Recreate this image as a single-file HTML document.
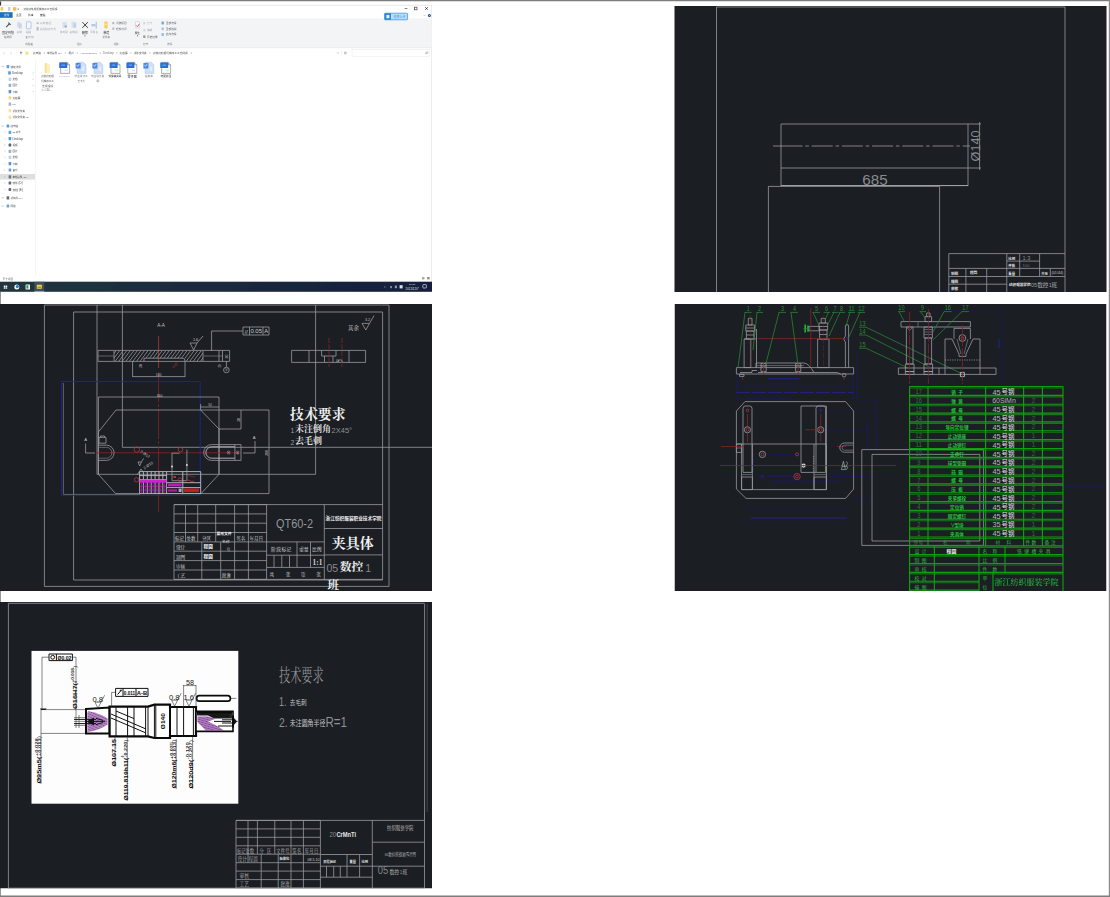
<!DOCTYPE html>
<html><head><meta charset="utf-8"><title>drawings</title><style>
html,body{margin:0;padding:0;background:#fff}
body{width:1110px;height:897px;overflow:hidden;font-family:"Liberation Sans",sans-serif}
svg{display:block}
.w{fill:none;stroke:#999b9f;stroke-width:.8}
.wb{fill:none;stroke:#b4b6b9;stroke-width:.95}
.wd{fill:none;stroke:#76787c;stroke-width:.75}
.wt{fill:none;stroke:#c9cacc;stroke-width:.8}
.r{fill:none;stroke:#8c2424;stroke-width:.8}
.rb{fill:none;stroke:#b23a3a;stroke-width:.8}
.b{fill:none;stroke:#2424a0;stroke-width:.85}
.bd{fill:none;stroke:#1b1b66;stroke-width:.8}
.gr{fill:none;stroke:#129e12;stroke-width:1.15}
.gl{fill:none;stroke:#2a8a33;stroke-width:.75}
.m{fill:none;stroke:#d21fd2;stroke-width:1}
.k{fill:none;stroke:#111;stroke-width:1}
.kb{fill:none;stroke:#0a0a0a;stroke-width:2}
.kt{fill:none;stroke:#333;stroke-width:.6}
.s{font-family:"Liberation Sans",sans-serif}
.f{font-family:"Liberation Serif",serif}
.mo{font-family:"Liberation Mono",monospace}
.c{font-family:"Liberation Sans","Noto Sans CJK SC",sans-serif}
.cb{font-family:"Liberation Sans","Noto Sans CJK SC",sans-serif;font-weight:bold}
.cs{font-family:"Liberation Serif","Noto Serif CJK SC",serif}
.csb{font-family:"Liberation Serif","Noto Serif CJK SC",serif;font-weight:bold}
</style></head><body><svg width="1110" height="897" viewBox="0 0 1110 897"><filter id="bl" x="0" y="0" width="1" height="1" filterUnits="objectBoundingBox"><feGaussianBlur stdDeviation=".42"/></filter><rect x="0" y="0" width="1110" height="897" fill="#fff"/><path d="M.4 0V897" stroke="#7d7d7d" stroke-width=".9"/><g id="p_ex" filter="url(#bl)"><clipPath id="cex"><rect x="0" y="0" width="432.4" height="292"/></clipPath><g clip-path="url(#cex)">
<rect x="0" y="1" width="432" height="291" fill="#ffffff"/>
<rect x="0" y="1.4" width="1.1" height="4.2" fill="#3a3a3a"/>
<path class="" d="M1 5.3L432 5.3" stroke="#e3e3e3" stroke-width=".8"/>
<path class="" d="M431.8 5.3L431.8 282" stroke="#dcdcdc" stroke-width=".8"/>
<rect x="0.6" y="7" width="2.6" height="3.6" fill="#f6c445" opacity=".9"/>
<rect x="8" y="7" width="2.4" height="3.8" fill="#b9c2cc" opacity=".8"/>
<rect x="13" y="7.2" width="3.4" height="3.4" fill="#f5b73c" opacity=".95"/>
<rect x="17.6" y="8.6" width="1.2" height="1" fill="#555"/>
<text class="c" x="23.5" y="9.94" font-size="2.6" fill="#222" opacity="0.85">边停边轧辊机械加工工艺规程</text>
<path class="" d="M404.6 8.5L407.4 8.5" stroke="#555" stroke-width=".7"/>
<rect x="414.4" y="7.2" width="2.6" height="2.6" fill="none" stroke="#444" stroke-width=".7"/>
<path class="" d="M425.2 7.2l2.6 2.6m0-2.6l-2.6 2.6" stroke="#333" stroke-width=".8" fill="none"/>
<rect x="0" y="12.2" width="12.6" height="5.6" fill="#1a6fc2"/>
<text class="c" x="3.8" y="16.01" font-size="2.8" fill="#fff" opacity="0.95">文件</text>
<text class="c" x="16" y="16.01" font-size="2.8" fill="#222" opacity="0.9">主页</text>
<text class="c" x="28" y="16.01" font-size="2.8" fill="#222" opacity="0.9">共享</text>
<text class="c" x="40" y="16.01" font-size="2.8" fill="#222" opacity="0.9">查看</text>
<rect x="0" y="18.4" width="431.6" height="29.2" fill="#f3f4f6"/>
<path class="" d="M0 47.7L432 47.7" stroke="#e4e5e7" stroke-width=".7"/>
<rect x="384.6" y="13.2" width="23" height="6.6" rx=".8" fill="#b7dffa" stroke="#2f8bd8" stroke-width=".7"/>
<rect x="384.6" y="13.2" width="6.4" height="6.6" fill="#2f8bd8"/>
<rect x="386.4" y="15" width="3" height="3.2" fill="#e8f4ff" rx=".6"/>
<text class="c" x="393.4" y="17.58" font-size="3" fill="#3a8ad8" opacity="0.8">拖拽上传</text>
<circle cx="429.4" cy="15.5" r="1.5" fill="#1c4f8e"/><circle cx="429.4" cy="15.5" r=".5" fill="#dfe9f5"/>
<path class="" d="M423.8 15.8l.8-.8.8.8" stroke="#888" stroke-width=".5" fill="none"/>
<path class="" d="M6.2 27.2l3.6-3.8M8.4 22.6l2.2 2.2" stroke="#454d5c" stroke-width="1.1" fill="none"/>
<text class="c" x="2" y="33.6" font-size="3" fill="#2a2a2a" opacity="0.85">固定到快</text>
<text class="c" x="4" y="37.89" font-size="2.5" fill="#2a2a2a" opacity="0.85">速访问</text>
<rect x="17" y="22" width="3.6" height="5" fill="#d5dce8" opacity=".8"/>
<rect x="18.6" y="23.6" width="3.2" height="5" fill="#c3cfe2" opacity=".8"/>
<text class="c" x="16.6" y="33.44" font-size="2.6" fill="#7d828a" opacity="0.7">复制</text>
<rect x="26.4" y="21.8" width="4.6" height="7" rx=".6" fill="#f4f7fc" stroke="#9db4d8" stroke-width=".7"/>
<text class="c" x="26" y="33.44" font-size="2.6" fill="#7d828a" opacity="0.75">粘贴</text>
<rect x="25.8" y="36" width="1.6" height="2.6" fill="#9aa3b0" opacity=".8"/>
<text class="c" x="28.2" y="38.41" font-size="2.8" fill="#7d828a" opacity="0.75">剪切</text>
<rect x="36.6" y="22.4" width="2" height="1.4" fill="#8a8f98" opacity=".7"/>
<text class="c" x="40" y="24.13" font-size="2.85" fill="#7d828a" opacity="0.6">复制路径</text>
<rect x="36.6" y="27" width="2" height="3.6" fill="#a8adb6" opacity=".8"/>
<text class="c" x="40" y="29.86" font-size="2.67" fill="#7d828a" opacity="0.6">粘贴快捷方式</text>
<text class="c" x="25.2" y="45.08" font-size="2.7" fill="#444" opacity="0.75">剪贴板</text>
<rect x="62.6" y="22" width="4.2" height="6" fill="#cfdcf0" opacity=".85"/>
<rect x="64.6" y="25.6" width="2.4" height="1.6" fill="#7aa0d6" opacity=".8"/>
<rect x="71.6" y="21.6" width="4" height="6.2" fill="#d3def0" opacity=".85"/>
<rect x="73.6" y="23.2" width="2.6" height="4.6" fill="#bccce6" opacity=".8"/>
<text class="c" x="60" y="33.46" font-size="2.67" fill="#7d828a" opacity="0.7">移动到</text>
<text class="c" x="69.6" y="33.46" font-size="2.67" fill="#7d828a" opacity="0.7">复制到</text>
<path class="" d="M82.4 22.2l5.4 5.6m0-5.6l-5.4 5.6" stroke="#2c2c2c" stroke-width=".9" fill="none"/>
<text class="c" x="82" y="33.54" font-size="2.9" fill="#111" opacity="0.95">删除</text>
<rect x="84.6" y="35.2" width="0.8" height="1.2" fill="#555"/>
<rect x="91.4" y="24" width="4" height="2.4" fill="#a8c0e4" opacity=".85"/>
<path class="" d="M96.2 21.8L96.2 28.6" stroke="#8aa4cf" stroke-width=".7"/>
<text class="c" x="90.2" y="33.44" font-size="2.6" fill="#7d828a" opacity="0.7">重命名</text>
<text class="c" x="76.8" y="44.96" font-size="2.4" fill="#555" opacity="0.7">组织</text>
<rect x="104.4" y="21.4" width="3.2" height="7" fill="#f6cf4a" rx=".8"/>
<rect x="105" y="23.6" width="2" height="1.6" fill="#fbe7a0"/>
<text class="c" x="103.4" y="33.54" font-size="2.9" fill="#111" opacity="0.95">新建</text>
<text class="c" x="102.6" y="37.89" font-size="2.5" fill="#444" opacity="0.75">文件夹</text>
<rect x="112.4" y="22" width="1.8" height="2.2" fill="#9aa3b3" opacity=".8"/>
<text class="c" x="116" y="24.07" font-size="2.7" fill="#333" opacity="0.75">新建项目</text>
<rect x="112.4" y="27.6" width="1.8" height="2.2" fill="#9aa3b3" opacity=".8"/>
<text class="c" x="116" y="29.67" font-size="2.7" fill="#333" opacity="0.75">轻松访问</text>
<text class="c" x="113.4" y="45.04" font-size="2.6" fill="#444" opacity="0.75">新建</text>
<rect x="135.4" y="21.6" width="4" height="6.4" rx=".5" fill="#fbfbfd" stroke="#b9bcc4" stroke-width=".5"/>
<path class="" d="M136.2 25.4l1.2 1.4 2-3" stroke="#d04a3a" stroke-width=".8" fill="none"/>
<text class="c" x="134.8" y="33.5" font-size="2.5" fill="#111" opacity="0.9">属性</text>
<rect x="137" y="35.2" width="0.8" height="1.2" fill="#555"/>
<rect x="143.4" y="22" width="1.8" height="2.4" fill="#c2c7d0" opacity=".7"/>
<text class="c" x="147" y="24.24" font-size="2.6" fill="#7d828a" opacity="0.5">打开</text>
<rect x="143.4" y="29" width="1.8" height="2.4" fill="#c2c7d0" opacity=".7"/>
<text class="c" x="147" y="31.14" font-size="2.6" fill="#7d828a" opacity="0.7">编辑</text>
<rect x="143.2" y="35.4" width="2.2" height="2.6" fill="#7c8a6a" opacity=".8"/>
<text class="c" x="147" y="37.75" font-size="2.65" fill="#333" opacity="0.8">历史记录</text>
<text class="c" x="143" y="45.04" font-size="2.6" fill="#444" opacity="0.7">打开</text>
<rect x="161.6" y="21.6" width="2.2" height="2.8" fill="#3f8fd8" opacity=".8"/>
<text class="c" x="165.8" y="23.97" font-size="2.7" fill="#2c3644" opacity="0.78">全部选择</text>
<rect x="161.6" y="27.4" width="2.2" height="2.8" fill="#9ab4d8" opacity=".8"/>
<text class="c" x="165.8" y="29.77" font-size="2.7" fill="#2c3644" opacity="0.78">全部取消</text>
<rect x="161.6" y="33.1" width="2.2" height="2.8" fill="#7aa6dc" opacity=".8"/>
<text class="c" x="165.8" y="35.47" font-size="2.7" fill="#2c3644" opacity="0.78">反向选择</text>
<text class="c" x="167" y="45.04" font-size="2.6" fill="#444" opacity="0.7">选择</text>
<path class="" d="M4.6 52l-1.2 1.2 1.2 1.2M10.6 52l1.2 1.2-1.2 1.2" stroke="#c4c4c4" stroke-width=".6" fill="none"/>
<path class="" d="M21 54.4v-2.6m-1.1 1.1l1.1-1.1 1.1 1.1" stroke="#555" stroke-width=".6" fill="none"/>
<rect x="25.4" y="51.4" width="3" height="3.4" fill="#f8e08a" rx=".6"/>
<text class="c" x="33" y="53.96" font-size="2.67" fill="#222" opacity="0.8">此电脑</text>
<text class="c" x="47" y="53.91" font-size="2.5" fill="#222" opacity="0.8">本地磁盘 (C:)</text>
<text class="c" x="68.5" y="53.97" font-size="2.7" fill="#222" opacity="0.8">用户</text>
<text class="s" x="80" y="53.88" font-size="2.5" fill="#555" opacity="0.8" textLength="17" lengthAdjust="spacingAndGlyphs">Administrator</text>
<text class="s" x="103" y="53.95" font-size="2.6" fill="#555" opacity="0.8" textLength="10.8" lengthAdjust="spacingAndGlyphs">Desktop</text>
<text class="c" x="119.6" y="53.98" font-size="2.7" fill="#222" opacity="0.8">大截屏</text>
<text class="c" x="133.7" y="53.94" font-size="2.6" fill="#222" opacity="0.8">新建文件夹</text>
<text class="c" x="152.8" y="53.97" font-size="2.7" fill="#222" opacity="0.8">边停边轧辊机械加工工艺规程</text>
<path class="" d="M44 52.2l.8.8-.8.8" stroke="#888" stroke-width=".5" fill="none"/>
<path class="" d="M65 52.2l.8.8-.8.8" stroke="#888" stroke-width=".5" fill="none"/>
<path class="" d="M77 52.2l.8.8-.8.8" stroke="#888" stroke-width=".5" fill="none"/>
<path class="" d="M100 52.2l.8.8-.8.8" stroke="#888" stroke-width=".5" fill="none"/>
<path class="" d="M116.4 52.2l.8.8-.8.8" stroke="#888" stroke-width=".5" fill="none"/>
<path class="" d="M130.6 52.2l.8.8-.8.8" stroke="#888" stroke-width=".5" fill="none"/>
<path class="" d="M149.6 52.2l.8.8-.8.8" stroke="#888" stroke-width=".5" fill="none"/>
<path class="" d="M191 52.2l.8.8-.8.8" stroke="#888" stroke-width=".5" fill="none"/>
<path class="" d="M337 52.6l.8.8.8-.8" stroke="#777" stroke-width=".5" fill="none"/>
<circle cx="345.4" cy="53" r="1" fill="none" stroke="#777" stroke-width=".5"/>
<path class="" d="M341.6 49.6L341.6 56.4" stroke="#ececec" stroke-width=".6"/>
<rect x="352" y="49.6" width="77.6" height="6.8" fill="#fff" stroke="#ececec" stroke-width=".6"/>
<path class="" d="M425.4 54l1-1" stroke="#888" stroke-width=".6" fill="none"/>
<circle cx="427" cy="52.6" r=".9" fill="none" stroke="#888" stroke-width=".5"/>
<path class="" d="M35.6 60L35.6 276" stroke="#f0f0f0" stroke-width=".7"/>
<rect x="0" y="174" width="35" height="5.6" fill="#d9d9d9" opacity=".85"/>
<path class="" d="M1.8 66.2l.9.9.9-.9" stroke="#666" stroke-width=".5" fill="none"/>
<rect x="6.6" y="65" width="2.6" height="3.2" fill="#3f8fe0" rx=".5" opacity=".85"/>
<text class="c" x="10.4" y="67.55" font-size="2.65" fill="#1e1e1e" opacity="0.85">快速访问</text>
<rect x="8.2" y="71.3" width="2.6" height="3.2" fill="#2f86d8" rx=".5" opacity=".85"/>
<text class="s" x="12" y="73.87" font-size="2.7" fill="#1e1e1e" opacity="0.85" textLength="11" lengthAdjust="spacingAndGlyphs">Desktop</text>
<rect x="8.6" y="77.7" width="2.6" height="3.2" fill="#b8c8d8" rx=".5" opacity=".85"/>
<text class="c" x="12.4" y="80.24" font-size="2.6" fill="#1e1e1e" opacity="0.85">文档</text>
<rect x="8.6" y="83.7" width="2.6" height="3.2" fill="#8aa0b8" rx=".5" opacity=".85"/>
<text class="c" x="12.4" y="86.24" font-size="2.6" fill="#1e1e1e" opacity="0.85">图片</text>
<rect x="8.6" y="90" width="2.6" height="3.2" fill="#2f7fd0" rx=".5" opacity=".85"/>
<text class="c" x="12.4" y="92.54" font-size="2.6" fill="#1e1e1e" opacity="0.85">下载</text>
<rect x="8.6" y="96.3" width="2.6" height="3.2" fill="#f3cf55" rx=".5" opacity=".85"/>
<text class="c" x="12.4" y="98.86" font-size="2.67" fill="#1e1e1e" opacity="0.85">大截屏</text>
<rect x="8.6" y="102.6" width="2.6" height="3.2" fill="#9aa4b4" rx=".5" opacity=".85"/>
<text class="s" x="12.4" y="105.04" font-size="2.3" fill="#1e1e1e" opacity="0.85">rec</text>
<rect x="8.6" y="109" width="2.6" height="3.2" fill="#f6dd8a" rx=".5" opacity=".85"/>
<text class="c" x="12.4" y="111.51" font-size="2.5" fill="#1e1e1e" opacity="0.85">新建文件夹</text>
<rect x="8.6" y="115.7" width="2.6" height="3.2" fill="#f6dd8a" rx=".5" opacity=".85"/>
<text class="c" x="12.4" y="118.2" font-size="2.5" fill="#1e1e1e" opacity="0.85">新建文件夹 (2)</text>
<path class="" d="M1.8 125.6l.9.9.9-.9" stroke="#666" stroke-width=".5" fill="none"/>
<rect x="6.6" y="124.4" width="2.6" height="3.2" fill="#3a8ad8" rx=".5" opacity=".85"/>
<text class="c" x="10.4" y="126.94" font-size="2.6" fill="#1e1e1e" opacity="0.85">此电脑</text>
<path class="" d="M4.4 131.6l.8.8-.8.8" stroke="#aaa" stroke-width=".45" fill="none"/>
<rect x="8.6" y="130.8" width="2.6" height="3.2" fill="#35a0c8" rx=".5" opacity=".85"/>
<text class="c" x="12.4" y="133.24" font-size="2.3" fill="#1e1e1e" opacity="0.85">3D 对象</text>
<path class="" d="M4.4 137.9l.8.8-.8.8" stroke="#aaa" stroke-width=".45" fill="none"/>
<rect x="8.6" y="137.1" width="2.6" height="3.2" fill="#2f86d8" rx=".5" opacity=".85"/>
<text class="s" x="12.4" y="139.63" font-size="2.6" fill="#1e1e1e" opacity="0.85" textLength="10.6" lengthAdjust="spacingAndGlyphs">Desktop</text>
<path class="" d="M4.4 144.2l.8.8-.8.8" stroke="#aaa" stroke-width=".45" fill="none"/>
<rect x="8.6" y="143.4" width="2.6" height="3.2" fill="#3c4450" rx=".5" opacity=".85"/>
<text class="c" x="12.4" y="145.94" font-size="2.6" fill="#1e1e1e" opacity="0.85">视频</text>
<path class="" d="M4.4 150.6l.8.8-.8.8" stroke="#aaa" stroke-width=".45" fill="none"/>
<rect x="8.6" y="149.8" width="2.6" height="3.2" fill="#8aa0b8" rx=".5" opacity=".85"/>
<text class="c" x="12.4" y="152.34" font-size="2.6" fill="#1e1e1e" opacity="0.85">图片</text>
<path class="" d="M4.4 156.6l.8.8-.8.8" stroke="#aaa" stroke-width=".45" fill="none"/>
<rect x="8.6" y="155.8" width="2.6" height="3.2" fill="#b8c8d8" rx=".5" opacity=".85"/>
<text class="c" x="12.4" y="158.34" font-size="2.6" fill="#1e1e1e" opacity="0.85">文档</text>
<path class="" d="M4.4 162.9l.8.8-.8.8" stroke="#aaa" stroke-width=".45" fill="none"/>
<rect x="8.6" y="162.1" width="2.6" height="3.2" fill="#2f7fd0" rx=".5" opacity=".85"/>
<text class="c" x="12.4" y="164.64" font-size="2.6" fill="#1e1e1e" opacity="0.85">下载</text>
<path class="" d="M4.4 169.2l.8.8-.8.8" stroke="#aaa" stroke-width=".45" fill="none"/>
<rect x="8.6" y="168.4" width="2.6" height="3.2" fill="#3f8fe0" rx=".5" opacity=".85"/>
<text class="c" x="12.4" y="170.94" font-size="2.6" fill="#1e1e1e" opacity="0.85">音乐</text>
<path class="" d="M4.4 176l.8.8-.8.8" stroke="#aaa" stroke-width=".45" fill="none"/>
<rect x="8.6" y="175.2" width="2.6" height="3.2" fill="#5a6470" rx=".5" opacity=".85"/>
<text class="c" x="12.4" y="177.68" font-size="2.45" fill="#1e1e1e" opacity="0.85">本地磁盘 (C:)</text>
<path class="" d="M4.4 182.2l.8.8-.8.8" stroke="#aaa" stroke-width=".45" fill="none"/>
<rect x="8.6" y="181.4" width="2.6" height="3.2" fill="#4a525c" rx=".5" opacity=".85"/>
<text class="c" x="12.4" y="183.98" font-size="2.7" fill="#1e1e1e" opacity="0.85">软件 (D:)</text>
<path class="" d="M4.4 188.7l.8.8-.8.8" stroke="#aaa" stroke-width=".45" fill="none"/>
<rect x="8.6" y="187.9" width="2.6" height="3.2" fill="#4a525c" rx=".5" opacity=".85"/>
<text class="c" x="12.4" y="190.51" font-size="2.8" fill="#1e1e1e" opacity="0.85">文档 (E:)</text>
<path class="" d="M1.8 197.4l.9.9.9-.9" stroke="#666" stroke-width=".5" fill="none"/>
<rect x="6.6" y="196.2" width="2.6" height="3.2" fill="#4a525c" rx=".5" opacity=".85"/>
<text class="c" x="10.4" y="198.71" font-size="2.5" fill="#1e1e1e" opacity="0.85">新加卷 (F:)</text>
<path class="" d="M1.8 205.6l.9.9.9-.9" stroke="#666" stroke-width=".5" fill="none"/>
<rect x="6.6" y="204.4" width="2.6" height="3.2" fill="#4f95c8" rx=".5" opacity=".85"/>
<text class="c" x="10.4" y="206.94" font-size="2.6" fill="#1e1e1e" opacity="0.85">网络</text>
<path class="" d="M32.6 73.4l1-1" stroke="#999" stroke-width=".5" fill="none"/>
<path class="" d="M32.6 79.8l1-1" stroke="#999" stroke-width=".5" fill="none"/>
<path class="" d="M32.6 85.8l1-1" stroke="#999" stroke-width=".5" fill="none"/>
<path class="" d="M32.6 92.1l1-1" stroke="#999" stroke-width=".5" fill="none"/>
<path d="M44.4 63.2h3l.8 1h1.8v8.8h-5.6z" fill="#fbeeb4" opacity=".9"/>
<rect x="45" y="63.2" width="1.6" height="9.8" fill="#f7df86" opacity=".8"/>
<text class="c" x="41.2" y="77.42" font-size="2.56" fill="#333" opacity="0.8">边停边轧辊</text>
<text class="c" x="41.2" y="81.92" font-size="2.56" fill="#333" opacity="0.8">机械加工工</text>
<text class="c" x="42" y="86.53" font-size="2.85" fill="#333" opacity="0.8">艺规程设</text>
<text class="c" x="41.6" y="90.54" font-size="2.6" fill="#333" opacity="0.55" textLength="10.4" lengthAdjust="spacingAndGlyphs">计+CAD...</text>
<path d="M60.6 62.4h6.6l2.4 2.4v8.6h-9z" fill="#fdfdfd" stroke="#6a7078" stroke-width=".55"/>
<path d="M67.2 62.4v2.4h2.4" fill="#d6dbe2" stroke="#555" stroke-width=".45"/>
<rect x="59.2" y="62.6" width="8" height="5.4" fill="#2a6fd6" rx=".5"/>
<rect x="61.4" y="64.4" width="3.6" height="1.6" fill="#6aa0ec" opacity=".8"/>
<rect x="64.8" y="69.6" width="3" height="1.6" fill="#dfe4ea"/>
<path d="M77.2 62.2h6.2l2.6 2.6v8.6h-8.8z" fill="#cfe0f6" stroke="#a9c2e6" stroke-width=".5"/>
<rect x="75.6" y="63" width="5" height="5.4" fill="#3f7fe0" rx=".5" opacity=".92"/>
<path class="" d="M76.6 64.8l1.2 1.6 1.6-2.4" stroke="#fff" stroke-width=".6" fill="none"/>
<rect x="82" y="66.6" width="2.2" height="4.4" fill="#e9f1fb" opacity=".8"/>
<path d="M94 62.2h6.2l2.6 2.6v8.6h-8.8z" fill="#cfe0f6" stroke="#a9c2e6" stroke-width=".5"/>
<rect x="92.4" y="63" width="5" height="5.4" fill="#3f7fe0" rx=".5" opacity=".92"/>
<path class="" d="M93.4 64.8l1.2 1.6 1.6-2.4" stroke="#fff" stroke-width=".6" fill="none"/>
<rect x="98.8" y="66.6" width="2.2" height="4.4" fill="#e9f1fb" opacity=".8"/>
<path d="M111 62.4h6.6l2.4 2.4v8.6h-9z" fill="#fdfdfd" stroke="#6a7078" stroke-width=".55"/>
<path d="M117.6 62.4v2.4h2.4" fill="#d6dbe2" stroke="#555" stroke-width=".45"/>
<rect x="109.6" y="62.6" width="8" height="5.4" fill="#2a6fd6" rx=".5"/>
<rect x="111.8" y="64.4" width="3.6" height="1.6" fill="#6aa0ec" opacity=".8"/>
<rect x="115.2" y="69.6" width="3" height="1.6" fill="#dfe4ea"/>
<path d="M127.8 62.4h6.6l2.4 2.4v8.6h-9z" fill="#fdfdfd" stroke="#6a7078" stroke-width=".55"/>
<path d="M134.4 62.4v2.4h2.4" fill="#d6dbe2" stroke="#555" stroke-width=".45"/>
<rect x="126.4" y="62.6" width="8" height="5.4" fill="#2a6fd6" rx=".5"/>
<rect x="128.6" y="64.4" width="3.6" height="1.6" fill="#6aa0ec" opacity=".8"/>
<rect x="132" y="69.6" width="3" height="1.6" fill="#dfe4ea"/>
<path d="M145 62.2h6.2l2.6 2.6v8.6h-8.8z" fill="#cfe0f6" stroke="#a9c2e6" stroke-width=".5"/>
<rect x="143.4" y="63" width="5" height="5.4" fill="#3f7fe0" rx=".5" opacity=".92"/>
<path class="" d="M144.4 64.8l1.2 1.6 1.6-2.4" stroke="#fff" stroke-width=".6" fill="none"/>
<rect x="149.8" y="66.6" width="2.2" height="4.4" fill="#e9f1fb" opacity=".8"/>
<path d="M161.6 62.4h6.6l2.4 2.4v8.6h-9z" fill="#fdfdfd" stroke="#6a7078" stroke-width=".55"/>
<path d="M168.2 62.4v2.4h2.4" fill="#d6dbe2" stroke="#555" stroke-width=".45"/>
<rect x="160.2" y="62.6" width="8" height="5.4" fill="#2a6fd6" rx=".5"/>
<rect x="162.4" y="64.4" width="3.6" height="1.6" fill="#6aa0ec" opacity=".8"/>
<rect x="165.8" y="69.6" width="3" height="1.6" fill="#dfe4ea"/>
<text class="s" x="59.2" y="77.38" font-size="2.4" fill="#666" opacity="0.6" textLength="10.8" lengthAdjust="spacingAndGlyphs">MAC(96)</text>
<text class="c" x="74.6" y="77.44" font-size="2.6" fill="#333" opacity="0.75">毕业设计工</text>
<text class="c" x="91" y="77.44" font-size="2.6" fill="#333" opacity="0.75">毕业设计说</text>
<text class="c" x="108.4" y="77.44" font-size="2.6" fill="#111" opacity="0.9">铣键槽夹具</text>
<text class="c" x="127.6" y="77.6" font-size="3.07" fill="#111" opacity="0.9">零件图</text>
<text class="c" x="144.7" y="77.48" font-size="2.73" fill="#333" opacity="0.78">任务书</text>
<text class="c" x="160.5" y="77.47" font-size="2.7" fill="#111" opacity="0.92">装配总图</text>
<text class="c" x="77.6" y="81.89" font-size="2.47" fill="#444" opacity="0.7">艺卡片</text>
<text class="c" x="96.4" y="82.01" font-size="2.8" fill="#444" opacity="0.7">明</text>
<text class="c" x="3" y="279.58" font-size="2.7" fill="#333" opacity="0.75">8 个项目</text>
<rect x="422" y="277" width="2.4" height="2.4" fill="#a8a8a8"/>
<rect x="427.2" y="277" width="2.4" height="2.4" fill="#8c8c8c"/>
<linearGradient id="tb" x1="0" x2="1" y1="0" y2="0"><stop offset="0" stop-color="#21363e"/><stop offset=".45" stop-color="#1b2b3c"/><stop offset="1" stop-color="#141f3c"/></linearGradient>
<rect x="0" y="281.7" width="432" height="10.1" fill="url(#tb)"/>
<rect x="34.4" y="281.7" width="9.8" height="10.1" fill="#4a5a62" opacity=".8"/>
<rect x="34.4" y="291" width="9.8" height="0.8" fill="#9ab8d0"/>
<path d="M3.8 285.4h1.5v1.5h-1.5zm1.9 0h1.5v1.5h-1.5zm-1.9 1.9h1.5v1.5h-1.5zm1.9 0h1.5v1.5h-1.5z" fill="#f2f2f2"/>
<circle cx="16.8" cy="287" r="2.5" fill="#f4f8fc"/><circle cx="17.3" cy="286.6" r="1.5" fill="#1f74d0"/>
<rect x="25.6" y="284.4" width="4.4" height="5" fill="#f4f8f4" rx=".5"/>
<rect x="26.4" y="285.2" width="2" height="3.4" fill="#2f9a5a"/>
<rect x="36.8" y="284.8" width="5" height="4" fill="#f2cf52" rx=".5"/>
<rect x="37.6" y="286.6" width="3.4" height="1.4" fill="#7a6a2a" opacity=".6"/>
<path class="" d="M384.2 287.3l.8-.8.8.8" stroke="#c8d0dc" stroke-width=".5" fill="none"/>
<rect x="390.2" y="286" width="1.8" height="2.2" fill="#9aa6b8" opacity=".8"/>
<rect x="394.8" y="285.6" width="2.2" height="2.6" fill="#aab4c4" opacity=".8"/>
<rect x="399.6" y="285.2" width="3" height="3.2" fill="#e8ecf2" opacity=".95"/>
<text class="s" x="408.8" y="285.28" font-size="2.5" fill="#e0e6ee" opacity="0.85" textLength="6.6" lengthAdjust="spacingAndGlyphs">15:21</text>
<text class="s" x="405.6" y="290.15" font-size="2.7" fill="#eef2f6" opacity="0.9" textLength="13" lengthAdjust="spacingAndGlyphs">2021/12/7</text>
<rect x="422.8" y="284.6" width="3.6" height="3.4" rx=".6" fill="none" stroke="#dfe5ee" stroke-width=".7"/>
</g></g>
<g id="p_tr"><rect x="674.5" y="6" width="432" height="286" fill="#1b1e23"/>
<path class="w" d="M716.5 7L1065 7"/>
<path class="w" d="M716.5 7L716.5 292"/>
<path class="w" d="M1065 7L1065 292"/>
<path class="w" d="M781 124H968V168H781Z"/>
<path class="w" d="M773 146L782 146"/>
<path class="w" d="M781.5 146L970 146" stroke-dasharray="21 2.8 3.6 2.8"/>
<path class="w" d="M781 168L781 186"/>
<path class="w" d="M968 168L968 186"/>
<path class="wb" d="M781 185.6L968 185.6"/>
<path class="w" d="M968 124L981 124"/>
<path class="w" d="M968 168L981 168"/>
<path class="w" d="M979.6 122L979.6 170"/>
<text class="s" x="875" y="185" font-size="15.2" fill="#888a8e" text-anchor="middle">685</text>
<text class="s" x="980" y="146" font-size="12.6" fill="#888a8e" transform="rotate(-90 980 146)" text-anchor="middle">Ø140</text>
<path class="w" d="M768.4 292L768.4 186.4L939.6 186.4L939.6 292"/>
<path class="w" d="M948.8 253.6L1065 253.6"/>
<path class="w" d="M948.8 253.6L948.8 292"/>
<path class="w" d="M1006.8 261.1L1039.6 261.1"/>
<path class="w" d="M948.8 268.4L1065 268.4"/>
<path class="w" d="M948.8 276.5L1065 276.5"/>
<path class="w" d="M948.8 284.2L1006.8 284.2"/>
<path class="w" d="M965.9 268.4L965.9 292"/>
<path class="w" d="M986.7 268.4L986.7 292"/>
<path class="w" d="M1006.8 253.6L1006.8 292"/>
<path class="w" d="M1019.7 253.6L1019.7 276.5"/>
<path class="w" d="M1039.6 253.6L1039.6 276.5"/>
<path class="w" d="M1050.3 268.4L1050.3 276.5"/>
<text class="cb" x="1008.3" y="259.6" font-size="3.4" fill="#e2e2e2">比例</text>
<text class="s" x="1022.5" y="260.3" font-size="5.6" fill="#8d8f93">1:3</text>
<text class="cb" x="1008.3" y="267.3" font-size="3.4" fill="#e2e2e2">件数</text>
<text class="s" x="1022.5" y="267.2" font-size="4.2" fill="#6d6f73">100</text>
<text class="cb" x="951" y="274.9" font-size="3.6" fill="#e2e2e2">制图</text>
<text class="cb" x="970" y="274.3" font-size="3.6" fill="#e2e2e2">程圆</text>
<text class="cb" x="1008.3" y="274.9" font-size="3.4" fill="#e2e2e2">重量</text>
<text class="cb" x="1041.3" y="274.6" font-size="3.2" fill="#e2e2e2">共张</text>
<text class="s" x="1051.6" y="274.3" font-size="3.2" fill="#c8c8c8" textLength="11.6" lengthAdjust="spacingAndGlyphs">(01/44)</text>
<text class="cb" x="951" y="282.8" font-size="3.6" fill="#e2e2e2">描图</text>
<text class="cb" x="951" y="290.3" font-size="3.6" fill="#e2e2e2">审核</text>
<text class="cb" x="1009" y="286.4" font-size="3.6" fill="#e2e2e2">纺织服装学院</text>
<text class="s" x="1030.9" y="286.6" font-size="5.6" fill="#9a9ca0">05</text>
<text class="cs" x="1037.2" y="286.6" font-size="5.6" fill="#c4c4c4">数控</text>
<text class="s" x="1048.7" y="286.6" font-size="5.6" fill="#9a9ca0">1</text>
<text class="cs" x="1051.6" y="286.6" font-size="5.6" fill="#c4c4c4">班</text></g>
<g id="p_ml"><clipPath id="cml"><rect x="0" y="304" width="432" height="287"/></clipPath><g clip-path="url(#cml)">
<rect x="0" y="304" width="432" height="287" fill="#1b1e23"/>
<path class="w" d="M44.4 305H389V586.4H44.4Z"/>
<path class="w" d="M73.6 312H382.6V580H73.6Z"/>
<path class="w" d="M97 305L97 474.3L315.6 474.3L315.6 305"/>
<path class="w" d="M122.4 305L122.4 447.3L432 447.3"/>
<text class="s" x="161" y="327.2" font-size="4.6" fill="#c0c0c0" text-anchor="middle">A-A</text>
<path class="rb" d="M158.6 336L158.6 368"/>
<path class="r" d="M158.6 372L158.6 512" stroke-dasharray="30 2 3 2"/>
<path class="w" d="M98 350.4H229.6V361.4H98Z"/>
<clipPath id="hml"><path d="M114 351H203V361H185V358.2H144V361H114Z"/></clipPath>
<path class="w" clip-path="url(#hml)" d="M104 362L113 350M107.55 362L116.55 350M111.1 362L120.1 350M114.65 362L123.65 350M118.2 362L127.2 350M121.75 362L130.75 350M125.3 362L134.3 350M128.85 362L137.85 350M132.4 362L141.4 350M135.95 362L144.95 350M139.5 362L148.5 350M143.05 362L152.05 350M146.6 362L155.6 350M150.15 362L159.15 350M153.7 362L162.7 350M157.25 362L166.25 350M160.8 362L169.8 350M164.35 362L173.35 350M167.9 362L176.9 350M171.45 362L180.45 350M175 362L184 350M178.55 362L187.55 350M182.1 362L191.1 350M185.65 362L194.65 350M189.2 362L198.2 350M192.75 362L201.75 350M196.3 362L205.3 350M199.85 362L208.85 350M203.4 362L212.4 350"/>
<path class="w" d="M144 361L144 358.2L183 358.2"/>
<path class="w" d="M183 358.2Q185 358.2 185 361"/>
<path class="w" d="M114 351L114 361"/>
<path class="w" d="M203 351L203 361"/>
<path class="wd" d="M98 356L114 356"/>
<path class="wd" d="M203 356L222.5 356"/>
<path class="w" d="M132.6 361L132.6 377"/>
<path class="w" d="M185 361L185 377"/>
<path class="w" d="M132.6 376.6L185 376.6"/>
<text class="s" x="158.6" y="376" font-size="3.4" fill="#c0c0c0" text-anchor="middle">160</text>
<text class="s" x="142" y="366" font-size="3.2" fill="#c0c0c0" transform="rotate(-90 142 366)" text-anchor="middle">20</text>
<text class="s" x="176" y="366" font-size="3.6" fill="#c03030" transform="rotate(-55 176 366)" text-anchor="middle">R10</text>
<path class="w" d="M190 343L197 343L193.6 350L190 343"/>
<path class="w" d="M197 343L203 336"/>
<text class="s" x="195.6" y="341" font-size="3.8" fill="#c8c8c8" text-anchor="middle">1.6</text>
<path class="w" d="M211.6 351L211.6 331L243 331"/>
<path class="w" d="M243 327H269V335H243Z"/>
<path class="w" d="M249.5 327L249.5 335"/>
<path class="w" d="M263 327L263 335"/>
<text class="s" x="246.3" y="333.6" font-size="5.4" fill="#d0d0d0" text-anchor="middle">//</text>
<text class="s" x="256.2" y="333.4" font-size="5.6" fill="#d0d0d0" textLength="11.6" lengthAdjust="spacingAndGlyphs" text-anchor="middle">0.05</text>
<text class="s" x="266" y="333.4" font-size="5.6" fill="#d0d0d0" text-anchor="middle">A</text>
<path class="w" d="M219 350.4L219 361.4"/>
<path class="w" d="M222.5 350.4L222.5 361.4"/>
<text class="s" x="227.6" y="356.6" font-size="3.4" fill="#c0c0c0" transform="rotate(-90 227.6 356.6)" text-anchor="middle">20</text>
<path class="w" d="M226.4 361L226.4 367"/>
<circle class="w" cx="226.4" cy="370" r="2.8"/>
<text class="s" x="226.4" y="371.4" font-size="3.4" fill="#c0c0c0" text-anchor="middle">V</text>
<text class="s" x="221" y="366" font-size="2.8" fill="#c0c0c0" transform="rotate(-90 221 366)" text-anchor="middle">20</text>
<path class="w" d="M291.6 350.4H365.6V362.4H291.6Z"/>
<path class="w" d="M309 350.4L309 362.4"/>
<path class="w" d="M349 350.4L349 362.4"/>
<path class="w" d="M321.6 350.4L321.6 356L336 356L336 350.4"/>
<path class="w" d="M324.5 356L324.5 362.4"/>
<path class="w" d="M333 356L333 362.4"/>
<path class="r" d="M329 338L329 367" stroke-dasharray="5 1.5"/>
<path class="r" d="M342 338L342 367" stroke-dasharray="5 1.5"/>
<path class="w" d="M338 362A2.2 2.2 0 0 1 342.4 362"/>
<text class="s" x="337.5" y="362" font-size="2.6" fill="#c0c0c0" text-anchor="middle">40</text>
<text class="cs" x="348" y="329.8" font-size="5.4" fill="#d0d0d0">其余</text>
<path class="w" d="M362 323.4L369.5 323.4L365.8 330L362 323.4"/>
<path class="w" d="M369.5 323.4L374 315.6"/>
<text class="s" x="367.6" y="321" font-size="3.6" fill="#c0c0c0" text-anchor="middle">3.2</text>
<path class="b" d="M61.6 381.6H200.2V495.4H61.6Z"/>
<path class="wd" d="M63.4 383L63.4 494.4L140 494.4"/>
<path class="w" d="M98.4 474.3L98.4 397L219 397L219 474.3"/>
<text class="s" x="159.5" y="396.6" font-size="3.4" fill="#c0c0c0" text-anchor="middle">360</text>
<path class="w" d="M116 410L200.6 410L219 429L219 474.3L201 493.6L115.6 493.6L98.4 474.3L98.4 432Z"/>
<path class="w" d="M200.6 410L269 410L269 493.6L201 493.6"/>
<path class="w" d="M241 410L241 429L219 429"/>
<path class="w" d="M200.6 407L219 407"/>
<path class="w" d="M200.6 404L200.6 410"/>
<text class="s" x="210" y="406.2" font-size="3.2" fill="#c0c0c0" text-anchor="middle">50</text>
<text class="s" x="239.6" y="420" font-size="3.2" fill="#c0c0c0" transform="rotate(-90 239.6 420)" text-anchor="middle">30</text>
<path class="r" d="M96 452.8L241 452.8"/>
<path class="w" d="M99 437.4H106V443.2H99Z"/>
<path class="w" d="M100.5 437.4V436H104.5V437.4"/>
<path class="w" d="M98.4 445.2H106.5A7.6 7.6 0 0 1 106.5 460.4H98.4"/>
<path class="wd" d="M98.4 447.4H106.5A5.4 5.4 0 0 1 106.5 458.2H98.4"/>
<text class="s" x="85.6" y="441.4" font-size="4.2" fill="#c8c8c8" text-anchor="middle">A</text>
<path class="w" d="M85.6 443.6L85.6 453L95 453"/>
<text class="s" x="254.2" y="439" font-size="4.2" fill="#c8c8c8" text-anchor="middle">A</text>
<path class="w" d="M255 441L255 453L243 453"/>
<path class="w" d="M241 444.6H211.6A7.9 7.9 0 0 0 211.6 460.4H241"/>
<path class="wb" d="M234.9 446.8H211.6A5.7 5.7 0 0 0 211.6 458.2H234.9"/>
<path class="w" d="M234.9 444.6L234.9 460.4"/>
<path class="w" d="M241 444.6L241 460.4"/>
<text class="s" x="230.5" y="452.6" font-size="3.2" fill="#c0c0c0" transform="rotate(-90 230.5 452.6)" text-anchor="middle">20</text>
<text class="s" x="238.6" y="452.6" font-size="3.2" fill="#c0c0c0" transform="rotate(-90 238.6 452.6)" text-anchor="middle">40</text>
<text class="s" x="268.2" y="453" font-size="3.4" fill="#c0c0c0" transform="rotate(-90 268.2 453)" text-anchor="middle">200</text>
<circle class="rb" cx="136.8" cy="449.6" r="2.7"/>
<circle class="rb" cx="180.5" cy="449.6" r="2.3"/>
<text class="s" x="140" y="452" font-size="3.8" fill="#c0c0c0" transform="rotate(35 140 452)">2-Ø12</text>
<text class="s" x="144.5" y="469.5" font-size="3.8" fill="#c0c0c0" transform="rotate(-35 144.5 469.5)">2-Ø10</text>
<path class="w" d="M138 462L141.4 462L139.7 466L138 462"/>
<path class="w" d="M141.4 462L143.6 458.4"/>
<path class="w" d="M137 475L141 469L143 472"/>
<circle class="rb" cx="136.6" cy="479.8" r="2.2"/>
<path class="w" d="M172 480.7L172 453.2L179.5 453.2"/>
<path class="w" d="M186.9 449.6L186.9 480.7"/>
<path class="w" d="M172 480.7L186.9 480.7"/>
<circle cx="172" cy="466.5" r="0.9" fill="#e8e8e8"/><circle cx="186.9" cy="465" r="0.9" fill="#e8e8e8"/>
<circle class="rb" cx="180" cy="479.7" r="2"/>
<rect x="173.5" y="476" width="2.4" height="2" fill="#c03030"/>
<path class="wb" d="M139.6 471.6H200.7V493.6H139.6Z"/>
<path class="wb" d="M143.4 471.6V493.6M147.3 471.6V493.6M151.2 471.6V493.6M155.1 471.6V493.6M159 471.6V493.6M162.8 471.6V493.6M166.6 471.6V493.6M139.6 475.6H166.6M139.6 479.6H166.6"/>
<rect x="139.6" y="479.7" width="27" height="3" fill="#d21fd2"/>
<path class="m" d="M141.5 482.7V493.6M145.3 482.7V493.6M149.2 482.7V493.6M153.1 482.7V493.6M157 482.7V493.6M160.9 482.7V493.6M164.7 482.7V493.6M139.6 486.3H166.6M139.6 490H166.6" opacity=".6"/>
<path class="wb" d="M166.6 482.7L200.7 482.7"/>
<path class="wb" d="M166.6 487.6L200.7 487.6"/>
<path class="wb" d="M182.8 471.6L182.8 493.6"/>
<rect x="168" y="483.6" width="13.5" height="2.8" fill="#d21fd2" opacity=".85"/>
<rect x="168" y="489.2" width="9" height="2.6" fill="#d21fd2" opacity=".7"/>
<rect x="178.6" y="488.6" width="3" height="3.4" fill="#e8e8e8" opacity=".7"/>
<rect x="184" y="488.4" width="15" height="3.8" fill="#d02020" opacity=".9"/>
<path class="rb" d="M186 480.8q2-1.6 4 0t4 0"/>
<path class="r" d="M187 476.3q2-1.4 4 0t4 0"/>
<text class="csb" x="290" y="418.6" font-size="13.9" fill="#f0f0f0">技术要求</text>
<text class="s" x="290.4" y="432.6" font-size="7" fill="#9a9ca0">1</text>
<text class="csb" x="295" y="432.4" font-size="9" fill="#dedede">未注倒角</text>
<text class="s" x="331.6" y="432.6" font-size="7.2" fill="#8e9094" textLength="20.5" lengthAdjust="spacingAndGlyphs">2X45°</text>
<text class="s" x="290.4" y="444.6" font-size="7" fill="#9a9ca0">2</text>
<text class="csb" x="295" y="444.4" font-size="9" fill="#dedede">去毛刺</text>
<path class="w" d="M174 504.6H266.6M174 513.9H266.6M174 523.2H266.6M174 532.5H266.6M174 541.9H266.6M174 551.2H266.6M174 560.6H266.6M174 570H266.6M174 579.4H266.6M174 504.6V541.9M185.5 504.6V541.9M197.7 504.6V541.9M215.7 504.6V541.9M234.6 504.6V541.9M248.4 504.6V541.9M266.6 504.6V541.9M174 541.9V579.4M201.8 541.9V579.4M220.7 541.9V579.4M234.6 541.9V579.4M248.4 541.9V579.4M266.6 541.9V579.4M174 504.6H382.6M174 579.4H382.6M324.3 504.6V579.4M266.6 541.9H324.3M266.6 555.2H324.3M266.6 567.4H324.3M297 541.9V567.4M310.5 541.9V567.4M274 555.2V567.4M281.8 555.2V567.4M289.5 555.2V567.4M324.3 528.5H382.6M324.3 554.9H382.6"/>
<text class="cs" x="175" y="540" font-size="4.4" fill="#e4e4e4">标记</text>
<text class="cs" x="186.6" y="540" font-size="4.4" fill="#e4e4e4">处数</text>
<text class="cs" x="202" y="540" font-size="4.4" fill="#e4e4e4">分区</text>
<text class="cb" x="216.4" y="535.4" font-size="3.8" fill="#f0f0f0">更改文件</text>
<text class="c" x="222" y="543" font-size="3.8" fill="#d8d8d8">名称</text>
<text class="c" x="226.5" y="551" font-size="3.8" fill="#b8b8b8">号</text>
<text class="cs" x="236.6" y="540" font-size="4.4" fill="#e4e4e4">签名</text>
<text class="cs" x="249.4" y="540" font-size="4.6" fill="#e4e4e4">年月日</text>
<text class="cs" x="176" y="549.2" font-size="4.6" fill="#e4e4e4">设计</text>
<text class="cs" x="176" y="558.6" font-size="4.6" fill="#e4e4e4">制图</text>
<text class="cs" x="176" y="568" font-size="4.6" fill="#e4e4e4">审核</text>
<text class="cs" x="176" y="577.4" font-size="4.6" fill="#e4e4e4">工艺</text>
<text class="cb" x="203.6" y="548.4" font-size="4.6" fill="#f4f4f4">程圆</text>
<text class="cb" x="203.6" y="557.6" font-size="4.6" fill="#f4f4f4">程圆</text>
<text class="cs" x="222" y="577.4" font-size="4.4" fill="#e4e4e4">批准</text>
<text class="s" x="294.5" y="527.8" font-size="12.2" fill="#94969a" textLength="37" lengthAdjust="spacingAndGlyphs" text-anchor="middle">QT60-2</text>
<text class="cs" x="271 276.2 281.4 286.6" y="550.6" font-size="4.8" fill="#e4e4e4">阶段标记</text>
<text class="cs" x="299" y="550.6" font-size="4.8" fill="#e4e4e4">重量</text>
<text class="cs" x="312" y="550.6" font-size="4.8" fill="#e4e4e4">比例</text>
<text class="f" x="317.4" y="564.6" font-size="7.4" fill="#d0d0d0" text-anchor="middle" font-weight="bold">1:1</text>
<text class="cs" x="269.4" y="575.8" font-size="4.4" fill="#e4e4e4">共</text>
<text class="cs" x="286" y="575.8" font-size="4.4" fill="#e4e4e4">张</text>
<text class="cs" x="301" y="575.8" font-size="4.4" fill="#e4e4e4">第</text>
<text class="cs" x="316.6" y="575.8" font-size="4.4" fill="#e4e4e4">张</text>
<text class="cb" x="325.6" y="519.6" font-size="4.66" fill="#f2f2f2">浙江纺织服装职业技术学院</text>
<text class="csb" x="331.8" y="548.4" font-size="14" fill="#f2f2f2">夹具体</text>
<text class="s" x="326.4" y="571.6" font-size="10.6" fill="#86888c">05</text>
<text class="csb" x="339.8" y="571" font-size="11.8" fill="#f0f0f0">数控</text>
<text class="s" x="365.2" y="571.6" font-size="10.6" fill="#86888c">1</text>
<text class="csb" x="327.4" y="588.6" font-size="11.4" fill="#f0f0f0">班</text>
</g></g>
<g id="p_mr"><clipPath id="cmr"><rect x="674.5" y="304" width="432" height="287"/></clipPath><g clip-path="url(#cmr)">
<rect x="674.5" y="304" width="432" height="287" fill="#1b1e23"/>
<path class="b" d="M768 378.8L799.4 378.8" stroke-width="1.1"/>
<path class="bd" d="M736 386L853 386" stroke-dasharray="6 2"/>
<path class="b" d="M736 392.4L853 392.4" stroke-dasharray="14 2"/>
<path class="bd" d="M740 399L792 399"/>
<path class="bd" d="M857 350L857 400"/>
<path class="bd" d="M857 400L876 400L876 450"/>
<path class="bd" d="M867 420L867 450"/>
<path class="bd" d="M826 476.4L870 476.4"/>
<path class="bd" d="M853 499L870 499"/>
<path class="bd" d="M740 508L850 508" opacity=".6"/>
<path class="b" d="M751 518L847 518"/>
<path class="bd" d="M740 523L850 523" opacity=".5"/>
<path class="bd" d="M826 411L870 411" opacity=".7"/>
<path class="bd" d="M826 430L870 430" opacity=".7"/>
<path class="bd" d="M770 454.4L795 454.4"/>
<path class="bd" d="M766 476.6L793 476.6"/>
<path class="bd" d="M770 481L840 481"/>
<path class="b" d="M753.2 454L753.2 473" stroke-dasharray="1.2 1.2" stroke-width="2"/>
<path class="bd" d="M931 311H1002V386H931Z" opacity=".7"/>
<path class="b" d="M999 339L999 348" stroke-width="1.6"/>
<path class="bd" d="M1063 486L1105 486"/>
<path class="bd" d="M736.4 374L736.4 400"/>
<path class="bd" d="M853.6 374L853.6 400"/>
<path class="w" d="M736.4 367.6H853.6V374H736.4Z"/>
<path class="w" d="M739.5 374.4H744V376.4H739.5Z"/>
<circle class="w" cx="844.1" cy="375.2" r="1.8"/>
<path class="r" d="M844 377L844 380"/>
<path class="r" d="M742.6 377L742.6 380"/>
<path class="w" d="M740 372.5H752V370.5H757M758 372.5H836Q839 372.5 841 374.4"/>
<path class="w" d="M744.1 339H750.8V367.6H744.1Z"/>
<path class="w" d="M744.1 339L756.5 339"/>
<path class="w" d="M756.5 329L756.5 367.6"/>
<path class="wd" d="M754.6 329q2.6 1 1.9 5"/>
<path class="w" d="M746.4 331H754V339H746.4Z"/>
<path class="w" d="M745.8 325H754.6V331H745.8Z"/>
<path class="w" d="M748.3 318.3H752V325H748.3Z"/>
<path class="w" d="M745.8 328L754.6 328"/>
<path class="w" d="M746.4 335L754 335"/>
<path class="r" d="M750.2 315L750.2 366" stroke-dasharray="6 1.5" opacity=".55"/>
<path class="w" d="M756 367.6V363H803.8Q809 363.4 813.9 372.5"/>
<path class="wd" d="M756 365.6L804 365.6"/>
<path class="w" d="M761 363.6H766.2V371.6H761Z"/>
<path class="r" d="M763.6 361.5L763.6 374.5"/>
<path class="w" d="M761 366L766.2 366"/>
<path class="w" d="M795.6 363.6H800.8V371.6H795.6Z"/>
<path class="r" d="M798.2 361.5L798.2 374.5"/>
<path class="w" d="M795.6 366L800.8 366"/>
<path class="w" d="M817.6 339H829V367.6H817.6Z"/>
<path class="w" d="M819.6 330H827V339H819.6Z"/>
<path class="w" d="M819 323H827.6V330H819Z"/>
<path class="w" d="M821.2 318.4H825.4V323H821.2Z"/>
<path class="w" d="M819 326.5L827.6 326.5"/>
<path class="w" d="M819.6 334.5L827 334.5"/>
<path class="r" d="M823.3 315L823.3 366" stroke-dasharray="6 1.5" opacity=".55"/>
<path class="w" d="M809 326.4H819.6V330.8H809Z"/>
<path d="M805.2 324.6V332.6M808 325.4V331.8" stroke="#22c03a" stroke-width="1.5"/>
<path class="gl" d="M803.4 328.6L809 328.6"/>
<path class="w" d="M845.4 367.6V342l-1.8-3 1.8-3V326Q845.4 324.6 847 324.6Q848.6 324.6 848.6 326V367.6"/>
<circle class="b" cx="846.8" cy="338.6" r="1.3"/>
<path class="r" d="M758 338.6L844 338.6"/>
<path class="r" d="M810.8 308L810.8 366"/>
<text class="s" x="748.2" y="311.2" font-size="6.4" fill="#2a8a36" textLength="3" lengthAdjust="spacingAndGlyphs" text-anchor="middle">1</text>
<path class="gl" d="M744.6 312.4L751.6 312.4"/>
<path class="gl" d="M745 312.4L738 368"/>
<text class="s" x="759.6" y="311.2" font-size="6.4" fill="#2a8a36" textLength="3" lengthAdjust="spacingAndGlyphs" text-anchor="middle">2</text>
<path class="gl" d="M756.4 312.4L763 312.4"/>
<path class="gl" d="M757 312.4L753 350"/>
<text class="s" x="782.4" y="311.2" font-size="6.4" fill="#2a8a36" textLength="3" lengthAdjust="spacingAndGlyphs" text-anchor="middle">3</text>
<path class="gl" d="M778.6 312.4L786 312.4"/>
<path class="gl" d="M779 312.4L765.6 365"/>
<text class="s" x="794.6" y="311.2" font-size="6.4" fill="#2a8a36" textLength="3" lengthAdjust="spacingAndGlyphs" text-anchor="middle">4</text>
<path class="gl" d="M790.6 312.4L798 312.4"/>
<path class="gl" d="M791 312.4L798 365"/>
<text class="s" x="816.6" y="311.2" font-size="6.4" fill="#2a8a36" textLength="3" lengthAdjust="spacingAndGlyphs" text-anchor="middle">5</text>
<path class="gl" d="M812.6 312.4L820 312.4"/>
<path class="gl" d="M813 312.4L819 325"/>
<text class="s" x="826.6" y="311.2" font-size="6.4" fill="#2a8a36" textLength="3" lengthAdjust="spacingAndGlyphs" text-anchor="middle">6</text>
<path class="gl" d="M823.6 312.4L830 312.4"/>
<path class="gl" d="M828.4 312.4L825 320"/>
<text class="s" x="835" y="311.2" font-size="6.4" fill="#2a8a36" textLength="3" lengthAdjust="spacingAndGlyphs" text-anchor="middle">7</text>
<path class="gl" d="M832 312.4L838 312.4"/>
<path class="gl" d="M834 312.4L827 326"/>
<text class="s" x="841.4" y="311.2" font-size="6.4" fill="#2a8a36" textLength="3" lengthAdjust="spacingAndGlyphs" text-anchor="middle">8</text>
<path class="gl" d="M838.6 312.4L845 312.4"/>
<path class="gl" d="M840 312.4L829 336"/>
<text class="s" x="851.6" y="311.2" font-size="6.4" fill="#2a8a36" textLength="6.2" lengthAdjust="spacingAndGlyphs" text-anchor="middle">11</text>
<path class="gl" d="M848 312.4L855 312.4"/>
<path class="gl" d="M850 312.4L846 326"/>
<text class="s" x="861.4" y="311.2" font-size="6.4" fill="#2a8a36" textLength="6.2" lengthAdjust="spacingAndGlyphs" text-anchor="middle">12</text>
<path class="gl" d="M857.6 312.4L865 312.4"/>
<path class="gl" d="M860 312.4L848 339"/>
<text class="s" x="862.4" y="326" font-size="6.4" fill="#2a8a36" textLength="6.2" lengthAdjust="spacingAndGlyphs" text-anchor="middle">13</text>
<path class="gl" d="M859 327.2L866 327.2"/>
<path class="gl" d="M866 327.2L962 373.8"/>
<text class="s" x="862.4" y="333.8" font-size="6.4" fill="#2a8a36" textLength="6.2" lengthAdjust="spacingAndGlyphs" text-anchor="middle">14</text>
<path class="gl" d="M859 335L866 335"/>
<path class="gl" d="M866 335L929.4 367"/>
<text class="s" x="862.4" y="347" font-size="6.4" fill="#2a8a36" textLength="6.2" lengthAdjust="spacingAndGlyphs" text-anchor="middle">15</text>
<path class="gl" d="M859 348.2L866 348.2"/>
<path class="gl" d="M866 348.2L908 368"/>
<path class="w" d="M898.4 368H996V374.4H898.4Z"/>
<path class="w" d="M939 368L939 374.4"/>
<path class="w" d="M945 368L945 374.4"/>
<path class="w" d="M980 368L980 374.4"/>
<path class="w" d="M901 321.6H970.4V327H901Z"/>
<path class="wd" d="M918 321.6L918 327"/>
<path class="w" d="M906.4 327H913V364H906.4Z"/>
<path class="w" d="M905.4 364H914V374.4H905.4Z"/>
<path class="wb" d="M905.4 371.6L914 371.6" stroke-width="1.8"/>
<path class="wd" d="M906.4 327l3.2 3.4 3.4-3.4"/>
<path class="w" d="M925 338H931.6V364H925Z"/>
<path class="w" d="M924 327H932.4V338H924Z"/>
<path class="wd" d="M924 329.5h8.4M924 332h8.4M924 334.5h8.4"/>
<path class="w" d="M924 364H932.6V374.4H924Z"/>
<path class="wb" d="M924 371.6L932.6 371.6" stroke-width="1.8"/>
<path class="w" d="M925 316.6H931.6V321.6H925Z"/>
<path class="w" d="M926.6 313H930V316.6H926.6Z"/>
<path class="w" d="M945 368L945 339L952 339L959 354L959 356.4L966 356.4L966 354L973 339L980 339L980 368"/>
<path class="w" d="M945 360L980 360" stroke-dasharray="1.2 1.2"/>
<path class="w" d="M954 339L954 328.4L970.4 328.4L970.4 339"/>
<path class="wd" d="M957 339L961 354"/>
<path class="wd" d="M968 339L964 354"/>
<circle class="w" cx="962.4" cy="338" r="3.4"/>
<circle class="rb" cx="962.4" cy="338" r="1.5"/>
<path class="wb" d="M960.4 372.4H964.4V376.6H960.4Z"/>
<path class="r" d="M909.6 312L909.6 384" stroke-dasharray="10 1.5"/>
<path class="r" d="M928.4 309L928.4 384" stroke-dasharray="10 1.5"/>
<path class="r" d="M962.4 325L962.4 384" stroke-dasharray="10 1.5"/>
<text class="s" x="901.4" y="310.4" font-size="6.4" fill="#2a8a36" textLength="6.2" lengthAdjust="spacingAndGlyphs" text-anchor="middle">10</text>
<path class="gl" d="M898 311.6L905 311.6"/>
<path class="gl" d="M899 311.6L904 321"/>
<text class="s" x="922.6" y="310.4" font-size="6.4" fill="#2a8a36" textLength="3" lengthAdjust="spacingAndGlyphs" text-anchor="middle">9</text>
<path class="gl" d="M919.6 311.6L926 311.6"/>
<path class="gl" d="M920.4 311.6L926 319"/>
<text class="s" x="947.8" y="310.4" font-size="6.4" fill="#2a8a36" textLength="6.2" lengthAdjust="spacingAndGlyphs" text-anchor="middle">16</text>
<path class="gl" d="M944 311.6L951.6 311.6"/>
<path class="gl" d="M944 311.6L933 332"/>
<text class="s" x="965.4" y="310.4" font-size="6.4" fill="#2a8a36" textLength="6.2" lengthAdjust="spacingAndGlyphs" text-anchor="middle">17</text>
<path class="gl" d="M961.6 311.6L969 311.6"/>
<path class="gl" d="M962 311.6L933 340"/>
<path class="w" d="M745 401.6L845.6 401.6L853.6 411L853.6 489L845.6 498.4L746 498.4L736.4 489L736.4 411Z"/>
<path class="w" d="M741.6 444L741.6 489.6L826.4 489.6L826.4 444"/>
<path class="w" d="M736.4 444L826.4 444"/>
<path class="w" d="M736.4 444H741.6V452.4H736.4Z"/>
<path class="wd" d="M736.4 448L741.6 448"/>
<path class="w" d="M743 472.4V408.4Q743 406 745.4 406H749.6Q752 406 752 408.4V472.4Z"/>
<path class="w" d="M752.4 444L752.4 489.6"/>
<path class="w" d="M741.6 477H752.4V489.6H741.6Z"/>
<path class="wd" d="M741.6 474.6L752.4 474.6"/>
<path class="r" d="M747.5 414L747.5 426"/>
<path class="r" d="M747.5 434L747.5 442"/>
<circle class="rb" cx="747.5" cy="410.4" r="1.3"/>
<circle class="w" cx="747.4" cy="429.8" r="3.1"/>
<circle class="rb" cx="747.4" cy="429.8" r="1.5"/>
<path class="w" d="M801 472.4L801 406L826.4 406L826.4 489.6"/>
<path class="w" d="M801 472.4L816 472.4"/>
<path class="w" d="M816 472.4V408.4Q816 406 818.4 406H823.2Q825.6 406 825.6 408.4V472.4Z"/>
<path class="w" d="M814 444L814 489.6"/>
<path class="w" d="M814 477H826.4V489.6H814Z"/>
<path class="wd" d="M814 474.6L826.4 474.6"/>
<path class="r" d="M820.8 414L820.8 426"/>
<path class="r" d="M820.8 434L820.8 442"/>
<circle class="b" cx="820.8" cy="410.4" r="1.3"/>
<circle class="w" cx="820.7" cy="429.8" r="3.1"/>
<circle class="rb" cx="820.7" cy="429.8" r="1.5"/>
<path class="r" d="M805 429.8L819 429.8"/>
<path class="w" d="M813.4 456L813.4 472" stroke-dasharray="1 1.4" stroke-width="2"/>
<circle class="w" cx="762.4" cy="454.4" r="3.2"/>
<circle class="rb" cx="762.4" cy="454.4" r="1.5"/>
<circle class="rb" cx="797" cy="454.4" r="1.5"/>
<circle class="rb" cx="797" cy="476.6" r="3.2"/>
<circle class="rb" cx="797" cy="476.6" r="1.4"/>
<circle class="b" cx="762.4" cy="476.6" r="1.4"/>
<circle cx="803.6" cy="465.6" r="2.1" fill="#d8d8d8"/><circle cx="803.6" cy="465.6" r=".8" fill="#333"/>
<path class="r" d="M721 446.6L743 446.6"/>
<path class="r" d="M837 446.6L846 446.6"/>
<path class="r" d="M720 465.6L896 465.6"/>
<path class="w" d="M853.6 443H844.4A4.6 4.6 0 0 0 844.4 452.2H853.6"/>
<path class="wd" d="M853.6 445.2H844.6A2.5 2.5 0 0 0 844.6 450.2H853.6"/>
<path class="w" d="M841.4 469.6l2-8.4 2 8.4zM842 466.4h5M846.4 461.4q2.4 2 0 4.2q2.6 2 0 4.2"/>
<path class="w" d="M861.8 449.6H983.6V545.4H861.8Z"/>
<path class="w" d="M872 454.4H979.8V541H872Z"/>
<path class="gr" d="M909.6 386.5H1063M909.6 395.35H1063M909.6 404.2H1063M909.6 413.05H1063M909.6 421.9H1063M909.6 430.75H1063M909.6 439.6H1063M909.6 448.45H1063M909.6 457.3H1063M909.6 466.15H1063M909.6 475H1063M909.6 483.85H1063M909.6 492.7H1063M909.6 501.55H1063M909.6 510.4H1063M909.6 519.25H1063M909.6 528.1H1063M909.6 536.95H1063M909.6 545.8H1063M909.6 554.65H1063M909.6 563.5H1063M909.6 572.35H1063M909.6 581.2H979M909.6 590.05H979" stroke-width=".75" stroke="#14a014"/>
<path class="gr" d="M909.6 388H1063M909.6 396.85H1063M909.6 405.7H1063M909.6 414.55H1063M909.6 423.4H1063M909.6 432.25H1063M909.6 441.1H1063M909.6 449.95H1063M909.6 458.8H1063M909.6 467.65H1063M909.6 476.5H1063M909.6 485.35H1063M909.6 494.2H1063M909.6 503.05H1063M909.6 511.9H1063M909.6 520.75H1063M909.6 529.6H1063M909.6 538.45H1063M909.6 547.3H1063M909.6 556.15H1063M909.6 565H1063M909.6 573.85H1063M909.6 582.7H979M909.6 591.55H979" stroke-width=".55" stroke="#0c5510" opacity=".7"/>
<path class="gr" d="M909.6 386.3V546.3M928 386.3V546.3M985.6 386.3V546.3M1023.6 386.3V546.3M1042.4 386.3V546.3M1063 386.3V546.3M909.6 546.3V592M1063 546.3V592M934.4 546.3V592M979 546.3V592M1005 546.3V572.85M993 572.85V592" stroke-width=".8" stroke="#129812"/>
<text class="s" x="918.8" y="394" font-size="7" fill="#2a7a32" textLength="6.4" lengthAdjust="spacingAndGlyphs" text-anchor="middle">17</text>
<text class="cb" x="951.25 958.15" y="393.9" font-size="4.6" fill="#25c23a">销子</text>
<text class="s" x="992.4" y="394.6" font-size="7.4" fill="#b8babc" textLength="8.2" lengthAdjust="spacingAndGlyphs">45</text>
<text class="c" x="1001.6" y="394.3" font-size="6.4" fill="#e0e0e0">号钢</text>
<text class="s" x="918.8" y="402.85" font-size="7" fill="#2a7a32" textLength="6.4" lengthAdjust="spacingAndGlyphs" text-anchor="middle">16</text>
<text class="cb" x="951.25 958.15" y="402.75" font-size="4.6" fill="#25c23a">弹簧</text>
<text class="s" x="992.2" y="403.35" font-size="7" fill="#b4b6b8" textLength="23.6" lengthAdjust="spacingAndGlyphs">60SiMn</text>
<text class="s" x="1033.4" y="402.85" font-size="7.2" fill="#2a6c30" text-anchor="middle">2</text>
<text class="s" x="918.8" y="411.7" font-size="7" fill="#2a7a32" textLength="6.4" lengthAdjust="spacingAndGlyphs" text-anchor="middle">15</text>
<text class="cb" x="951.25 958.15" y="411.6" font-size="4.6" fill="#25c23a">螺母</text>
<text class="s" x="992.4" y="412.3" font-size="7.4" fill="#b8babc" textLength="8.2" lengthAdjust="spacingAndGlyphs">45</text>
<text class="c" x="1001.6" y="412" font-size="6.4" fill="#e0e0e0">号钢</text>
<text class="s" x="1033.4" y="411.7" font-size="7.2" fill="#2a6c30" text-anchor="middle">2</text>
<text class="s" x="918.8" y="420.55" font-size="7" fill="#2a7a32" textLength="6.4" lengthAdjust="spacingAndGlyphs" text-anchor="middle">14</text>
<text class="cb" x="951.25 958.15" y="420.45" font-size="4.6" fill="#25c23a">螺母</text>
<text class="s" x="992.4" y="421.15" font-size="7.4" fill="#b8babc" textLength="8.2" lengthAdjust="spacingAndGlyphs">45</text>
<text class="c" x="1001.6" y="420.85" font-size="6.4" fill="#e0e0e0">号钢</text>
<text class="s" x="1033.4" y="420.55" font-size="7.2" fill="#2a6c30" text-anchor="middle">2</text>
<text class="s" x="918.8" y="429.4" font-size="7" fill="#2a7a32" textLength="6.4" lengthAdjust="spacingAndGlyphs" text-anchor="middle">13</text>
<text class="cb" x="945.5" y="429.3" font-size="4.6" fill="#25c23a">导向定位键</text>
<text class="s" x="992.4" y="430" font-size="7.4" fill="#b8babc" textLength="8.2" lengthAdjust="spacingAndGlyphs">45</text>
<text class="c" x="1001.6" y="429.7" font-size="6.4" fill="#e0e0e0">号钢</text>
<text class="s" x="1033.4" y="429.4" font-size="7.2" fill="#2a6c30" text-anchor="middle">2</text>
<text class="s" x="918.8" y="438.25" font-size="7" fill="#2a7a32" textLength="6.4" lengthAdjust="spacingAndGlyphs" text-anchor="middle">12</text>
<text class="cb" x="947.8" y="438.15" font-size="4.6" fill="#25c23a">止动销座</text>
<text class="s" x="992.4" y="438.85" font-size="7.4" fill="#b8babc" textLength="8.2" lengthAdjust="spacingAndGlyphs">45</text>
<text class="c" x="1001.6" y="438.55" font-size="6.4" fill="#e0e0e0">号钢</text>
<text class="s" x="1033.4" y="438.25" font-size="7.2" fill="#2a6c30" text-anchor="middle">1</text>
<text class="s" x="918.8" y="447.1" font-size="7" fill="#2a7a32" textLength="6.4" lengthAdjust="spacingAndGlyphs" text-anchor="middle">11</text>
<text class="cb" x="947.8" y="447" font-size="4.6" fill="#25c23a">止动销钉</text>
<text class="s" x="992.4" y="447.7" font-size="7.4" fill="#b8babc" textLength="8.2" lengthAdjust="spacingAndGlyphs">45</text>
<text class="c" x="1001.6" y="447.4" font-size="6.4" fill="#e0e0e0">号钢</text>
<text class="s" x="1033.4" y="447.1" font-size="7.2" fill="#2a6c30" text-anchor="middle">1</text>
<text class="s" x="918.8" y="455.95" font-size="7" fill="#2a7a32" textLength="6.4" lengthAdjust="spacingAndGlyphs" text-anchor="middle">10</text>
<text class="cb" x="950.1" y="455.85" font-size="4.6" fill="#25c23a">支承钉</text>
<text class="s" x="992.4" y="456.55" font-size="7.4" fill="#b8babc" textLength="8.2" lengthAdjust="spacingAndGlyphs">45</text>
<text class="c" x="1001.6" y="456.25" font-size="6.4" fill="#e0e0e0">号钢</text>
<text class="s" x="1033.4" y="455.95" font-size="7.2" fill="#2a6c30" text-anchor="middle">2</text>
<text class="s" x="918.8" y="464.8" font-size="7" fill="#2a7a32" textLength="3.2" lengthAdjust="spacingAndGlyphs" text-anchor="middle">9</text>
<text class="cb" x="947.8" y="464.7" font-size="4.6" fill="#25c23a">球型垫圈</text>
<text class="s" x="992.4" y="465.4" font-size="7.4" fill="#b8babc" textLength="8.2" lengthAdjust="spacingAndGlyphs">45</text>
<text class="c" x="1001.6" y="465.1" font-size="6.4" fill="#e0e0e0">号钢</text>
<text class="s" x="1033.4" y="464.8" font-size="7.2" fill="#2a6c30" text-anchor="middle">2</text>
<text class="s" x="918.8" y="473.65" font-size="7" fill="#2a7a32" textLength="3.2" lengthAdjust="spacingAndGlyphs" text-anchor="middle">8</text>
<text class="cb" x="951.25 958.15" y="473.55" font-size="4.6" fill="#25c23a">挡圈</text>
<text class="s" x="992.4" y="474.25" font-size="7.4" fill="#b8babc" textLength="8.2" lengthAdjust="spacingAndGlyphs">45</text>
<text class="c" x="1001.6" y="473.95" font-size="6.4" fill="#e0e0e0">号钢</text>
<text class="s" x="1033.4" y="473.65" font-size="7.2" fill="#2a6c30" text-anchor="middle">2</text>
<text class="s" x="918.8" y="482.5" font-size="7" fill="#2a7a32" textLength="3.2" lengthAdjust="spacingAndGlyphs" text-anchor="middle">7</text>
<text class="cb" x="951.25 958.15" y="482.4" font-size="4.6" fill="#25c23a">螺母</text>
<text class="s" x="992.4" y="483.1" font-size="7.4" fill="#b8babc" textLength="8.2" lengthAdjust="spacingAndGlyphs">45</text>
<text class="c" x="1001.6" y="482.8" font-size="6.4" fill="#e0e0e0">号钢</text>
<text class="s" x="1033.4" y="482.5" font-size="7.2" fill="#2a6c30" text-anchor="middle">2</text>
<text class="s" x="918.8" y="491.35" font-size="7" fill="#2a7a32" textLength="3.2" lengthAdjust="spacingAndGlyphs" text-anchor="middle">6</text>
<text class="cb" x="951.25 958.15" y="491.25" font-size="4.6" fill="#25c23a">压板</text>
<text class="s" x="992.4" y="491.95" font-size="7.4" fill="#b8babc" textLength="8.2" lengthAdjust="spacingAndGlyphs">45</text>
<text class="c" x="1001.6" y="491.65" font-size="6.4" fill="#e0e0e0">号钢</text>
<text class="s" x="1033.4" y="491.35" font-size="7.2" fill="#2a6c30" text-anchor="middle">2</text>
<text class="s" x="918.8" y="500.2" font-size="7" fill="#2a7a32" textLength="3.2" lengthAdjust="spacingAndGlyphs" text-anchor="middle">5</text>
<text class="cb" x="947.8" y="500.1" font-size="4.6" fill="#25c23a">夹紧螺栓</text>
<text class="s" x="992.4" y="500.8" font-size="7.4" fill="#b8babc" textLength="8.2" lengthAdjust="spacingAndGlyphs">45</text>
<text class="c" x="1001.6" y="500.5" font-size="6.4" fill="#e0e0e0">号钢</text>
<text class="s" x="1033.4" y="500.2" font-size="7.2" fill="#2a6c30" text-anchor="middle">2</text>
<text class="s" x="918.8" y="509.05" font-size="7" fill="#2a7a32" textLength="3.2" lengthAdjust="spacingAndGlyphs" text-anchor="middle">4</text>
<text class="cb" x="950.1" y="508.95" font-size="4.6" fill="#25c23a">定位销</text>
<text class="s" x="992.4" y="509.65" font-size="7.4" fill="#b8babc" textLength="8.2" lengthAdjust="spacingAndGlyphs">45</text>
<text class="c" x="1001.6" y="509.35" font-size="6.4" fill="#e0e0e0">号钢</text>
<text class="s" x="1033.4" y="509.05" font-size="7.2" fill="#2a6c30" text-anchor="middle">2</text>
<text class="s" x="918.8" y="517.9" font-size="7" fill="#2a7a32" textLength="3.2" lengthAdjust="spacingAndGlyphs" text-anchor="middle">3</text>
<text class="cb" x="947.8" y="517.8" font-size="4.6" fill="#25c23a">固定螺钉</text>
<text class="s" x="992.4" y="518.5" font-size="7.4" fill="#b8babc" textLength="8.2" lengthAdjust="spacingAndGlyphs">45</text>
<text class="c" x="1001.6" y="518.2" font-size="6.4" fill="#e0e0e0">号钢</text>
<text class="s" x="1033.4" y="517.9" font-size="7.2" fill="#2a6c30" text-anchor="middle">2</text>
<text class="s" x="918.8" y="526.75" font-size="7" fill="#2a7a32" textLength="3.2" lengthAdjust="spacingAndGlyphs" text-anchor="middle">2</text>
<text class="s" x="950.98" y="526.85" font-size="5.4" fill="#27b436">V</text>
<text class="cb" x="954.38" y="526.65" font-size="4.6" fill="#25c23a">型块</text>
<text class="s" x="992.4" y="527.35" font-size="7.4" fill="#b8babc" textLength="8.2" lengthAdjust="spacingAndGlyphs">35</text>
<text class="c" x="1001.6" y="527.05" font-size="6.4" fill="#e0e0e0">号钢</text>
<text class="s" x="1033.4" y="526.75" font-size="7.2" fill="#2a6c30" text-anchor="middle">1</text>
<text class="s" x="918.8" y="535.6" font-size="7" fill="#2a7a32" textLength="3.2" lengthAdjust="spacingAndGlyphs" text-anchor="middle">1</text>
<text class="cb" x="950.1" y="535.5" font-size="4.6" fill="#25c23a">夹具体</text>
<text class="s" x="992.4" y="536.2" font-size="7.4" fill="#b8babc" textLength="8.2" lengthAdjust="spacingAndGlyphs">45</text>
<text class="c" x="1001.6" y="535.9" font-size="6.4" fill="#e0e0e0">号钢</text>
<text class="s" x="1033.4" y="535.6" font-size="7.2" fill="#2a6c30" text-anchor="middle">1</text>
<text class="c" x="913.4 918.6" y="544.35" font-size="4.6" fill="#27a436">序号</text>
<text class="c" x="943" y="544.35" font-size="4.6" fill="#27a436">名</text>
<text class="c" x="966" y="544.35" font-size="4.6" fill="#27a436">称</text>
<text class="c" x="995.6" y="544.35" font-size="4.6" fill="#27a436">材</text>
<text class="c" x="1006.6" y="544.35" font-size="4.6" fill="#27a436">料</text>
<text class="c" x="1025.6 1031.6" y="544.35" font-size="4.8" fill="#2fc03e">件数</text>
<text class="c" x="1044.6 1051" y="544.35" font-size="4.8" fill="#2fc03e">备注</text>
<text class="c" x="914.6 921.8" y="553.3" font-size="4.8" fill="#2fb83e">设计</text>
<text class="c" x="914.6 921.8" y="562.15" font-size="4.8" fill="#2fb83e">制图</text>
<text class="c" x="914.6 921.8" y="571" font-size="4.8" fill="#2fb83e">审核</text>
<text class="c" x="914.6 921.8" y="579.85" font-size="4.8" fill="#2fb83e">校对</text>
<text class="c" x="914.6 921.8" y="588.7" font-size="4.8" fill="#2fb83e">描图</text>
<text class="cb" x="946.6" y="552.9" font-size="4.8" fill="#f0f0f0">程圆</text>
<text class="c" x="982.6 992.4" y="553.3" font-size="4.8" fill="#2fb83e">名称</text>
<text class="c" x="982.6 992.4" y="562.15" font-size="4.8" fill="#2fb83e">比例</text>
<text class="c" x="982.6 992.4" y="571" font-size="4.8" fill="#2fb83e">件数</text>
<text class="c" x="1017 1024.2 1031.4 1038.6 1045.8" y="552.7" font-size="4.8" fill="#2fc03e">铣键槽夹具</text>
<text class="c" x="982.6" y="579.85" font-size="4.8" fill="#2fb83e">单</text>
<text class="c" x="982.6" y="588.7" font-size="4.8" fill="#2fb83e">位</text>
<text class="cs" x="994.4" y="585.4" font-size="8" fill="#2fc846">浙江纺织服装学院</text>
</g></g>
<g id="p_bl"><clipPath id="cbl"><rect x="0" y="602" width="432" height="286.5"/></clipPath><g clip-path="url(#cbl)">
<rect x="0" y="602" width="432" height="286.5" fill="#1b1e23"/>
<path class="w" d="M8.4 888.5L8.4 603.3L424.4 603.3"/>
<path class="w" d="M424.6 603.6L424.6 810"/>
<path class="wd" d="M427.2 603.6L427.2 812" opacity=".6"/>
<path class="wd" d="M8 888L424.5 888"/>
<rect x="31.5" y="650.9" width="206.8" height="152.8" fill="#fdfdfd"/>
<path class="k" d="M49 654H72.4V660.6H49Z"/>
<path class="k" d="M56.4 654L56.4 660.6"/>
<circle class="k" cx="52.7" cy="657.3" r="1.9" stroke-width="1.3"/>
<text class="s" x="64.4" y="659.8" font-size="5.2" fill="#0c0c0c" textLength="14" lengthAdjust="spacingAndGlyphs" text-anchor="middle" font-weight="bold">Ø0.02</text>
<path class="kt" d="M49 657.2L42 657.2L42 709"/>
<path class="kt" d="M72.4 657.2L76 657.2L76 728"/>
<path d="M40 708.4h6.6l-1 1.6h-4.6z" fill="#111"/>
<path class="kt" d="M41 709.6L86 709.6"/>
<path class="kt" d="M41 733.4L86 733.4"/>
<path class="kt" d="M41 709.6L41 784"/>
<path class="kt" d="M74 721.4L238 721.4"/>
<path class="kt" d="M74 717.6H86M74 725.4H86M79 715v13"/>
<path d="M86 709L109.6 707.6V733.4H86Z" fill="#fff" stroke="#0a0a0a" stroke-width="2"/>
<clipPath id="h1"><path d="M87.4 711Q100 713 107.6 718.6V724.4Q100 730 87.4 732Z"/></clipPath>
<path clip-path="url(#h1)" d="M78 734l12-26M79.2 734l12-26M80.4 734l12-26M81.6 734l12-26M82.8 734l12-26M84 734l12-26M85.2 734l12-26M86.4 734l12-26M87.6 734l12-26M88.8 734l12-26M90 734l12-26M91.2 734l12-26M92.4 734l12-26M93.6 734l12-26M94.8 734l12-26M96 734l12-26M97.2 734l12-26M98.4 734l12-26M99.6 734l12-26M100.8 734l12-26M102 734l12-26M103.2 734l12-26M104.4 734l12-26M105.6 734l12-26M106.8 734l12-26M108 734l12-26M109.2 734l12-26M110.4 734l12-26M111.6 734l12-26M112.8 734l12-26" stroke="#7a2f92" stroke-width=".85" fill="none"/>
<path d="M86.4 721.4l7.6-4v8z" fill="#111"/>
<path class="k" d="M74 719.4H96M74 723.6H96" stroke-width=".8"/>
<path class="k" d="M94 721.4H105" stroke="#fdfdfd" stroke-width="1.6"/>
<path class="k" d="M96 718.4l7 2M96 724.6l7-2" stroke="#5a2a6a" stroke-width=".7"/>
<path d="M109.6 706.6H148L154.4 704.6H170V707H196V736H170V738H154.4L148 736.4H109.6Z" fill="#fff" stroke="#0a0a0a" stroke-width="2.2" stroke-linejoin="miter"/>
<path class="k" d="M116 706.6V736.4M127.6 706.6V736.4M134 706.6V736.4M145.6 706.6V736.4M148 706.6V736.4M154.4 704.6V738M155.8 704.6V738" stroke-width=".8"/>
<path class="kb" d="M170 704.6V738" stroke-width="2.4"/>
<path class="k" d="M177 707V736M183.6 707V736" stroke-width=".8"/>
<path class="k" d="M193.4 707L193.4 736" stroke="#777" stroke-width="1.6"/>
<path class="k" d="M111 714L146 729M111 718L146 733M116 711L134 718.6" stroke-width=".7"/>
<text class="s" x="164.8" y="721.2" font-size="5.4" fill="#0c0c0c" transform="rotate(-90 164.8 721.2)" textLength="16" lengthAdjust="spacingAndGlyphs" text-anchor="middle" font-weight="bold">Ø140</text>
<path d="M196 711.4H233V731.4H196Z" fill="#fff" stroke="#0a0a0a" stroke-width="1.6"/>
<clipPath id="h2"><path d="M197 712.4H232V718H216L206 721.4L216 725L222 730.4H197Z"/></clipPath>
<clipPath id="h3"><path d="M197 712.4H232V718.6H214L208 715.6H197Z"/></clipPath>
<path clip-path="url(#h3)" d="M192 720l5-9M193.25 720l5-9M194.5 720l5-9M195.75 720l5-9M197 720l5-9M198.25 720l5-9M199.5 720l5-9M200.75 720l5-9M202 720l5-9M203.25 720l5-9M204.5 720l5-9M205.75 720l5-9M207 720l5-9M208.25 720l5-9M209.5 720l5-9M210.75 720l5-9M212 720l5-9M213.25 720l5-9M214.5 720l5-9M215.75 720l5-9M217 720l5-9M218.25 720l5-9M219.5 720l5-9M220.75 720l5-9M222 720l5-9M223.25 720l5-9M224.5 720l5-9M225.75 720l5-9M227 720l5-9M228.25 720l5-9M229.5 720l5-9M230.75 720l5-9M232 720l5-9M233.25 720l5-9" stroke="#101010" stroke-width="1.05" fill="none"/>
<clipPath id="h4"><path d="M197.4 716.6L208 716.6L215 719L208 721.6L218 726.4L224 730.6H206L197.4 722Z"/></clipPath>
<path clip-path="url(#h4)" d="M186 732l9-17M187.15 732l9-17M188.3 732l9-17M189.45 732l9-17M190.6 732l9-17M191.75 732l9-17M192.9 732l9-17M194.05 732l9-17M195.2 732l9-17M196.35 732l9-17M197.5 732l9-17M198.65 732l9-17M199.8 732l9-17M200.95 732l9-17M202.1 732l9-17M203.25 732l9-17M204.4 732l9-17M205.55 732l9-17M206.7 732l9-17M207.85 732l9-17M209 732l9-17M210.15 732l9-17M211.3 732l9-17M212.45 732l9-17M213.6 732l9-17M214.75 732l9-17M215.9 732l9-17M217.05 732l9-17M218.2 732l9-17M219.35 732l9-17M220.5 732l9-17M221.65 732l9-17M222.8 732l9-17M223.95 732l9-17M225.1 732l9-17M226.25 732l9-17M227.4 732l9-17M228.55 732l9-17" stroke="#7a2f92" stroke-width=".9" fill="none"/>
<path class="kb" d="M197 712.6H232" stroke-width="1.8"/>
<path class="k" d="M218 726H232" stroke="#444" stroke-width=".8"/>
<path class="k" d="M214 721.4H231" stroke="#fdfdfd" stroke-width="1.4"/>
<path class="k" d="M222 719.8H233M222 723H233" stroke-width=".7"/>
<path d="M237 721.4l-4-4.6v9.2z" fill="#111"/>
<path class="kb" d="M233 715.6V727.4"/>
<rect x="196.6" y="695.7" width="33.8" height="5.4" rx="2.7" fill="#fff" stroke="#0a0a0a" stroke-width="1.7"/>
<path class="kt" d="M230.4 698.4L236.4 698.4"/>
<path class="kt" d="M95 702.2L101 702.2L98 708.2L95 702.2" stroke-width=".8"/>
<path class="kt" d="M101 702.2L104.6 695.2" stroke-width=".8"/>
<text class="s" x="92.4" y="701.6" font-size="7.4" fill="#1a1a1a" textLength="10.6" lengthAdjust="spacingAndGlyphs">0.8</text>
<path class="kt" d="M171.6 700.2L177.6 700.2L174.6 706.2L171.6 700.2" stroke-width=".8"/>
<path class="kt" d="M177.6 700.2L181.2 693.2" stroke-width=".8"/>
<text class="s" x="169" y="699.6" font-size="7.4" fill="#1a1a1a" textLength="10.6" lengthAdjust="spacingAndGlyphs">0.8</text>
<path class="kt" d="M186 700.2L192 700.2L189 706.2L186 700.2" stroke-width=".8"/>
<path class="kt" d="M192 700.2L195.6 693.2" stroke-width=".8"/>
<text class="s" x="183.4" y="699.6" font-size="7.4" fill="#1a1a1a" textLength="10.6" lengthAdjust="spacingAndGlyphs">1.6</text>
<text class="s" x="190" y="685.2" font-size="6.4" fill="#1a1a1a" textLength="8" lengthAdjust="spacingAndGlyphs" text-anchor="middle">58</text>
<path class="kt" d="M183.4 685.6L196 685.6"/>
<path class="kt" d="M183.6 685L183.6 707"/>
<path class="kt" d="M196 685L196 707"/>
<path class="k" d="M115.6 688.4H148V696.4H115.6Z"/>
<path class="k" d="M123 688.4L123 696.4"/>
<path class="k" d="M136 688.4L136 696.4"/>
<path class="k" d="M117.6 694.6L121.4 690" stroke-width="1.2"/>
<path d="M121.8 689.4l-2.4.6 1.7 1.6z" fill="#111"/>
<text class="s" x="129.5" y="695" font-size="5.2" fill="#0c0c0c" textLength="11.4" lengthAdjust="spacingAndGlyphs" text-anchor="middle" font-weight="bold">0.011</text>
<text class="s" x="142" y="695" font-size="5.2" fill="#0c0c0c" textLength="10.4" lengthAdjust="spacingAndGlyphs" text-anchor="middle" font-weight="bold">A-B</text>
<path class="kt" d="M115.6 692.4L111.6 692.4L111.6 706.6"/>
<text class="s" x="41" y="783.6" font-size="5.6" fill="#0c0c0c" transform="rotate(-90 41 783.6)" textLength="27" lengthAdjust="spacingAndGlyphs" font-weight="bold">Ø95m5(</text>
<text class="s" x="37.7" y="756.2" font-size="2.9" fill="#1a1a1a" transform="rotate(-90 37.7 756.2)" textLength="18" lengthAdjust="spacingAndGlyphs" font-weight="bold">+0.028</text>
<text class="s" x="40.8" y="756.2" font-size="2.9" fill="#1a1a1a" transform="rotate(-90 40.8 756.2)" textLength="18" lengthAdjust="spacingAndGlyphs" font-weight="bold">+0.013</text>
<text class="s" x="41" y="737.9" font-size="5.6" fill="#1a1a1a" transform="rotate(-90 41 737.9)">)</text>
<text class="s" x="77" y="709" font-size="5.6" fill="#0c0c0c" transform="rotate(-90 77 709)" textLength="26" lengthAdjust="spacingAndGlyphs" font-weight="bold">Ø16H7(</text>
<text class="s" x="73.7" y="682.6" font-size="2.9" fill="#1a1a1a" transform="rotate(-90 73.7 682.6)" textLength="14.6" lengthAdjust="spacingAndGlyphs" font-weight="bold">+0.018</text>
<text class="s" x="76.8" y="682.6" font-size="2.9" fill="#1a1a1a" transform="rotate(-90 76.8 682.6)" font-weight="bold">0</text>
<text class="s" x="77" y="667.7" font-size="5.6" fill="#1a1a1a" transform="rotate(-90 77 667.7)">)</text>
<path class="kt" d="M115 737L115 767"/>
<text class="s" x="115.6" y="766.4" font-size="5.6" fill="#0c0c0c" transform="rotate(-90 115.6 766.4)" textLength="27.4" lengthAdjust="spacingAndGlyphs" font-weight="bold">Ø107.15</text>
<path class="kt" d="M127.3 737L127.3 801"/>
<text class="s" x="127.6" y="800.6" font-size="5.6" fill="#0c0c0c" transform="rotate(-90 127.6 800.6)" textLength="43" lengthAdjust="spacingAndGlyphs" font-weight="bold">Ø119.819h11(</text>
<text class="s" x="124.3" y="757.2" font-size="2.9" fill="#1a1a1a" transform="rotate(-90 124.3 757.2)" font-weight="bold">0</text>
<text class="s" x="127.4" y="757.2" font-size="2.9" fill="#1a1a1a" transform="rotate(-90 127.4 757.2)" textLength="15.4" lengthAdjust="spacingAndGlyphs" font-weight="bold">-0.220</text>
<text class="s" x="127.6" y="741.5" font-size="5.6" fill="#1a1a1a" transform="rotate(-90 127.6 741.5)">)</text>
<path class="kt" d="M176.2 739L176.2 789"/>
<text class="s" x="176.2" y="788.4" font-size="5.6" fill="#0c0c0c" transform="rotate(-90 176.2 788.4)" textLength="29" lengthAdjust="spacingAndGlyphs" font-weight="bold">Ø120m6(</text>
<text class="s" x="172.9" y="759" font-size="2.9" fill="#1a1a1a" transform="rotate(-90 172.9 759)" textLength="17" lengthAdjust="spacingAndGlyphs" font-weight="bold">+0.035</text>
<text class="s" x="176" y="759" font-size="2.9" fill="#1a1a1a" transform="rotate(-90 176 759)" textLength="17" lengthAdjust="spacingAndGlyphs" font-weight="bold">+0.013</text>
<text class="s" x="176.2" y="741.7" font-size="5.6" fill="#1a1a1a" transform="rotate(-90 176.2 741.7)">)</text>
<path class="kt" d="M192.6 737L192.6 789"/>
<text class="s" x="192.6" y="788.6" font-size="5.6" fill="#0c0c0c" transform="rotate(-90 192.6 788.6)" textLength="29" lengthAdjust="spacingAndGlyphs" font-weight="bold">Ø120d9(</text>
<text class="s" x="189.3" y="759.2" font-size="2.9" fill="#1a1a1a" transform="rotate(-90 189.3 759.2)" textLength="17" lengthAdjust="spacingAndGlyphs" font-weight="bold">-0.120</text>
<text class="s" x="192.4" y="759.2" font-size="2.9" fill="#1a1a1a" transform="rotate(-90 192.4 759.2)" textLength="17" lengthAdjust="spacingAndGlyphs" font-weight="bold">-0.207</text>
<text class="s" x="192.6" y="741.9" font-size="5.6" fill="#1a1a1a" transform="rotate(-90 192.6 741.9)">)</text>
<text class="cs" x="279" y="681.6" font-size="18" fill="#8f9195" textLength="44.64" lengthAdjust="spacingAndGlyphs">技术要求</text>
<text class="s" x="279" y="706.2" font-size="13" fill="#8f9195" textLength="7.4" lengthAdjust="spacingAndGlyphs">1.</text>
<text class="c" x="289.8" y="705.4" font-size="7.4" fill="#c9c9c9" textLength="16.87" lengthAdjust="spacingAndGlyphs">去毛刺</text>
<text class="s" x="279" y="727" font-size="13.6" fill="#8f9195" textLength="8.6" lengthAdjust="spacingAndGlyphs">2.</text>
<text class="c" x="289.8" y="726.4" font-size="7.6" fill="#c9c9c9" textLength="35.57" lengthAdjust="spacingAndGlyphs">未注圆角半径</text>
<text class="s" x="325.4" y="727" font-size="14" fill="#8f9195" textLength="21.6" lengthAdjust="spacingAndGlyphs">R=1</text>
<path class="w" d="M236 820.4H320.4M236 828.9H320.4M236 837.3H320.4M236 845.8H320.4M236 854.2H320.4M236 862.7H320.4M236 871.1H320.4M236 879.6H320.4M236 888H320.4M236 820.4V854.2M248 820.4V854.2M257.4 820.4V854.2M274.8 820.4V854.2M291 820.4V854.2M303.4 820.4V854.2M320.4 820.4V854.2M236 854.2V888M261.2 854.2V888M278.2 854.2V888M291 854.2V888M303.4 854.2V888M320.4 854.2V888M248 854.2V862.7M236 820.4H424.5M372.3 820.4V888M424.5 810V888M320.4 854.5H372.3M320.4 866.2H424.5M320.4 877.2H372.3M347 854.5V877.2M359.6 854.5V877.2M326.5 866.2V877.2M333.7 866.2V877.2M340.3 866.2V877.2M372.3 842.2H424.5"/>
<text class="cs" x="237" y="852.6" font-size="5.2" fill="#bdbdbd" textLength="17.05" lengthAdjust="spacingAndGlyphs">标记处数</text>
<text class="cs" x="259.4" y="852.6" font-size="5.2" fill="#bdbdbd" textLength="4.2" lengthAdjust="spacingAndGlyphs">分</text>
<text class="cs" x="267" y="852.6" font-size="5.2" fill="#bdbdbd" textLength="4.2" lengthAdjust="spacingAndGlyphs">区</text>
<text class="cs" x="276" y="852.6" font-size="5.2" fill="#bdbdbd" textLength="13.41" lengthAdjust="spacingAndGlyphs">文件号</text>
<text class="cs" x="292" y="852.6" font-size="5.2" fill="#bdbdbd" textLength="9.36" lengthAdjust="spacingAndGlyphs">签名</text>
<text class="cs" x="304.4" y="852.6" font-size="5.2" fill="#bdbdbd" textLength="14.04" lengthAdjust="spacingAndGlyphs">年月日</text>
<text class="cs" x="237.6" y="861.2" font-size="5.2" fill="#bdbdbd" textLength="9.36" lengthAdjust="spacingAndGlyphs">设计</text>
<text class="cs" x="248.6" y="861.2" font-size="5.2" fill="#9a9a9a" textLength="9.36" lengthAdjust="spacingAndGlyphs">程圆</text>
<text class="cb" x="279.6" y="860.4" font-size="3.6" fill="#e0e0e0" textLength="9.72" lengthAdjust="spacingAndGlyphs">标准化</text>
<text class="s" x="307.6" y="860.6" font-size="3.4" fill="#d0d0d0" textLength="12" lengthAdjust="spacingAndGlyphs">08.5.10</text>
<text class="cs" x="239.6" y="877.8" font-size="5.2" fill="#bdbdbd" textLength="9.36" lengthAdjust="spacingAndGlyphs">审核</text>
<text class="cs" x="239.6" y="886.4" font-size="5.2" fill="#bdbdbd" textLength="9.36" lengthAdjust="spacingAndGlyphs">工艺</text>
<text class="cs" x="280.4" y="886.4" font-size="5.2" fill="#bdbdbd" textLength="9.36" lengthAdjust="spacingAndGlyphs">批准</text>
<text class="s" x="329.4" y="837.4" font-size="6.8" fill="#8a8c90" textLength="6.6" lengthAdjust="spacingAndGlyphs">20</text>
<text class="s" x="336.4" y="837.4" font-size="6.6" fill="#e6e6e6" textLength="19.6" lengthAdjust="spacingAndGlyphs" font-weight="bold">CrMnTi</text>
<text class="cb" x="323.4" y="862.6" font-size="3.4" fill="#e0e0e0" textLength="12.5" lengthAdjust="spacingAndGlyphs">阶段标记</text>
<text class="cb" x="349.6" y="862.8" font-size="3.6" fill="#e0e0e0" textLength="6.48" lengthAdjust="spacingAndGlyphs">重量</text>
<text class="cb" x="361.6" y="862.8" font-size="3.6" fill="#e0e0e0" textLength="6.48" lengthAdjust="spacingAndGlyphs">比例</text>
<text class="cs" x="387" y="830" font-size="5.2" fill="#c6c6c6" textLength="26.52" lengthAdjust="spacingAndGlyphs">纺织服装学院</text>
<text class="cs" x="384.8" y="856" font-size="4.4" fill="#c6c6c6" textLength="31.3" lengthAdjust="spacingAndGlyphs">05数控班辊轴零件图</text>
<text class="s" x="377.8" y="874.4" font-size="10.4" fill="#85878b" textLength="10.4" lengthAdjust="spacingAndGlyphs">05</text>
<text class="cs" x="389.6" y="873.8" font-size="5.6" fill="#c6c6c6" textLength="9.52" lengthAdjust="spacingAndGlyphs">数控</text>
<text class="s" x="399.6" y="873.8" font-size="5.6" fill="#85878b">1</text>
<text class="cs" x="402.6" y="873.8" font-size="5.6" fill="#c6c6c6" textLength="4.76" lengthAdjust="spacingAndGlyphs">班</text>
</g></g><path d="M0 .5H1110" stroke="#7d7d7d" stroke-width="1.4"/><path d="M1109.4 0V897" stroke="#8a8a8a" stroke-width="1.2"/><path d="M0 896.3H1110" stroke="#7d7d7d" stroke-width="1.4"/></svg></body></html>
